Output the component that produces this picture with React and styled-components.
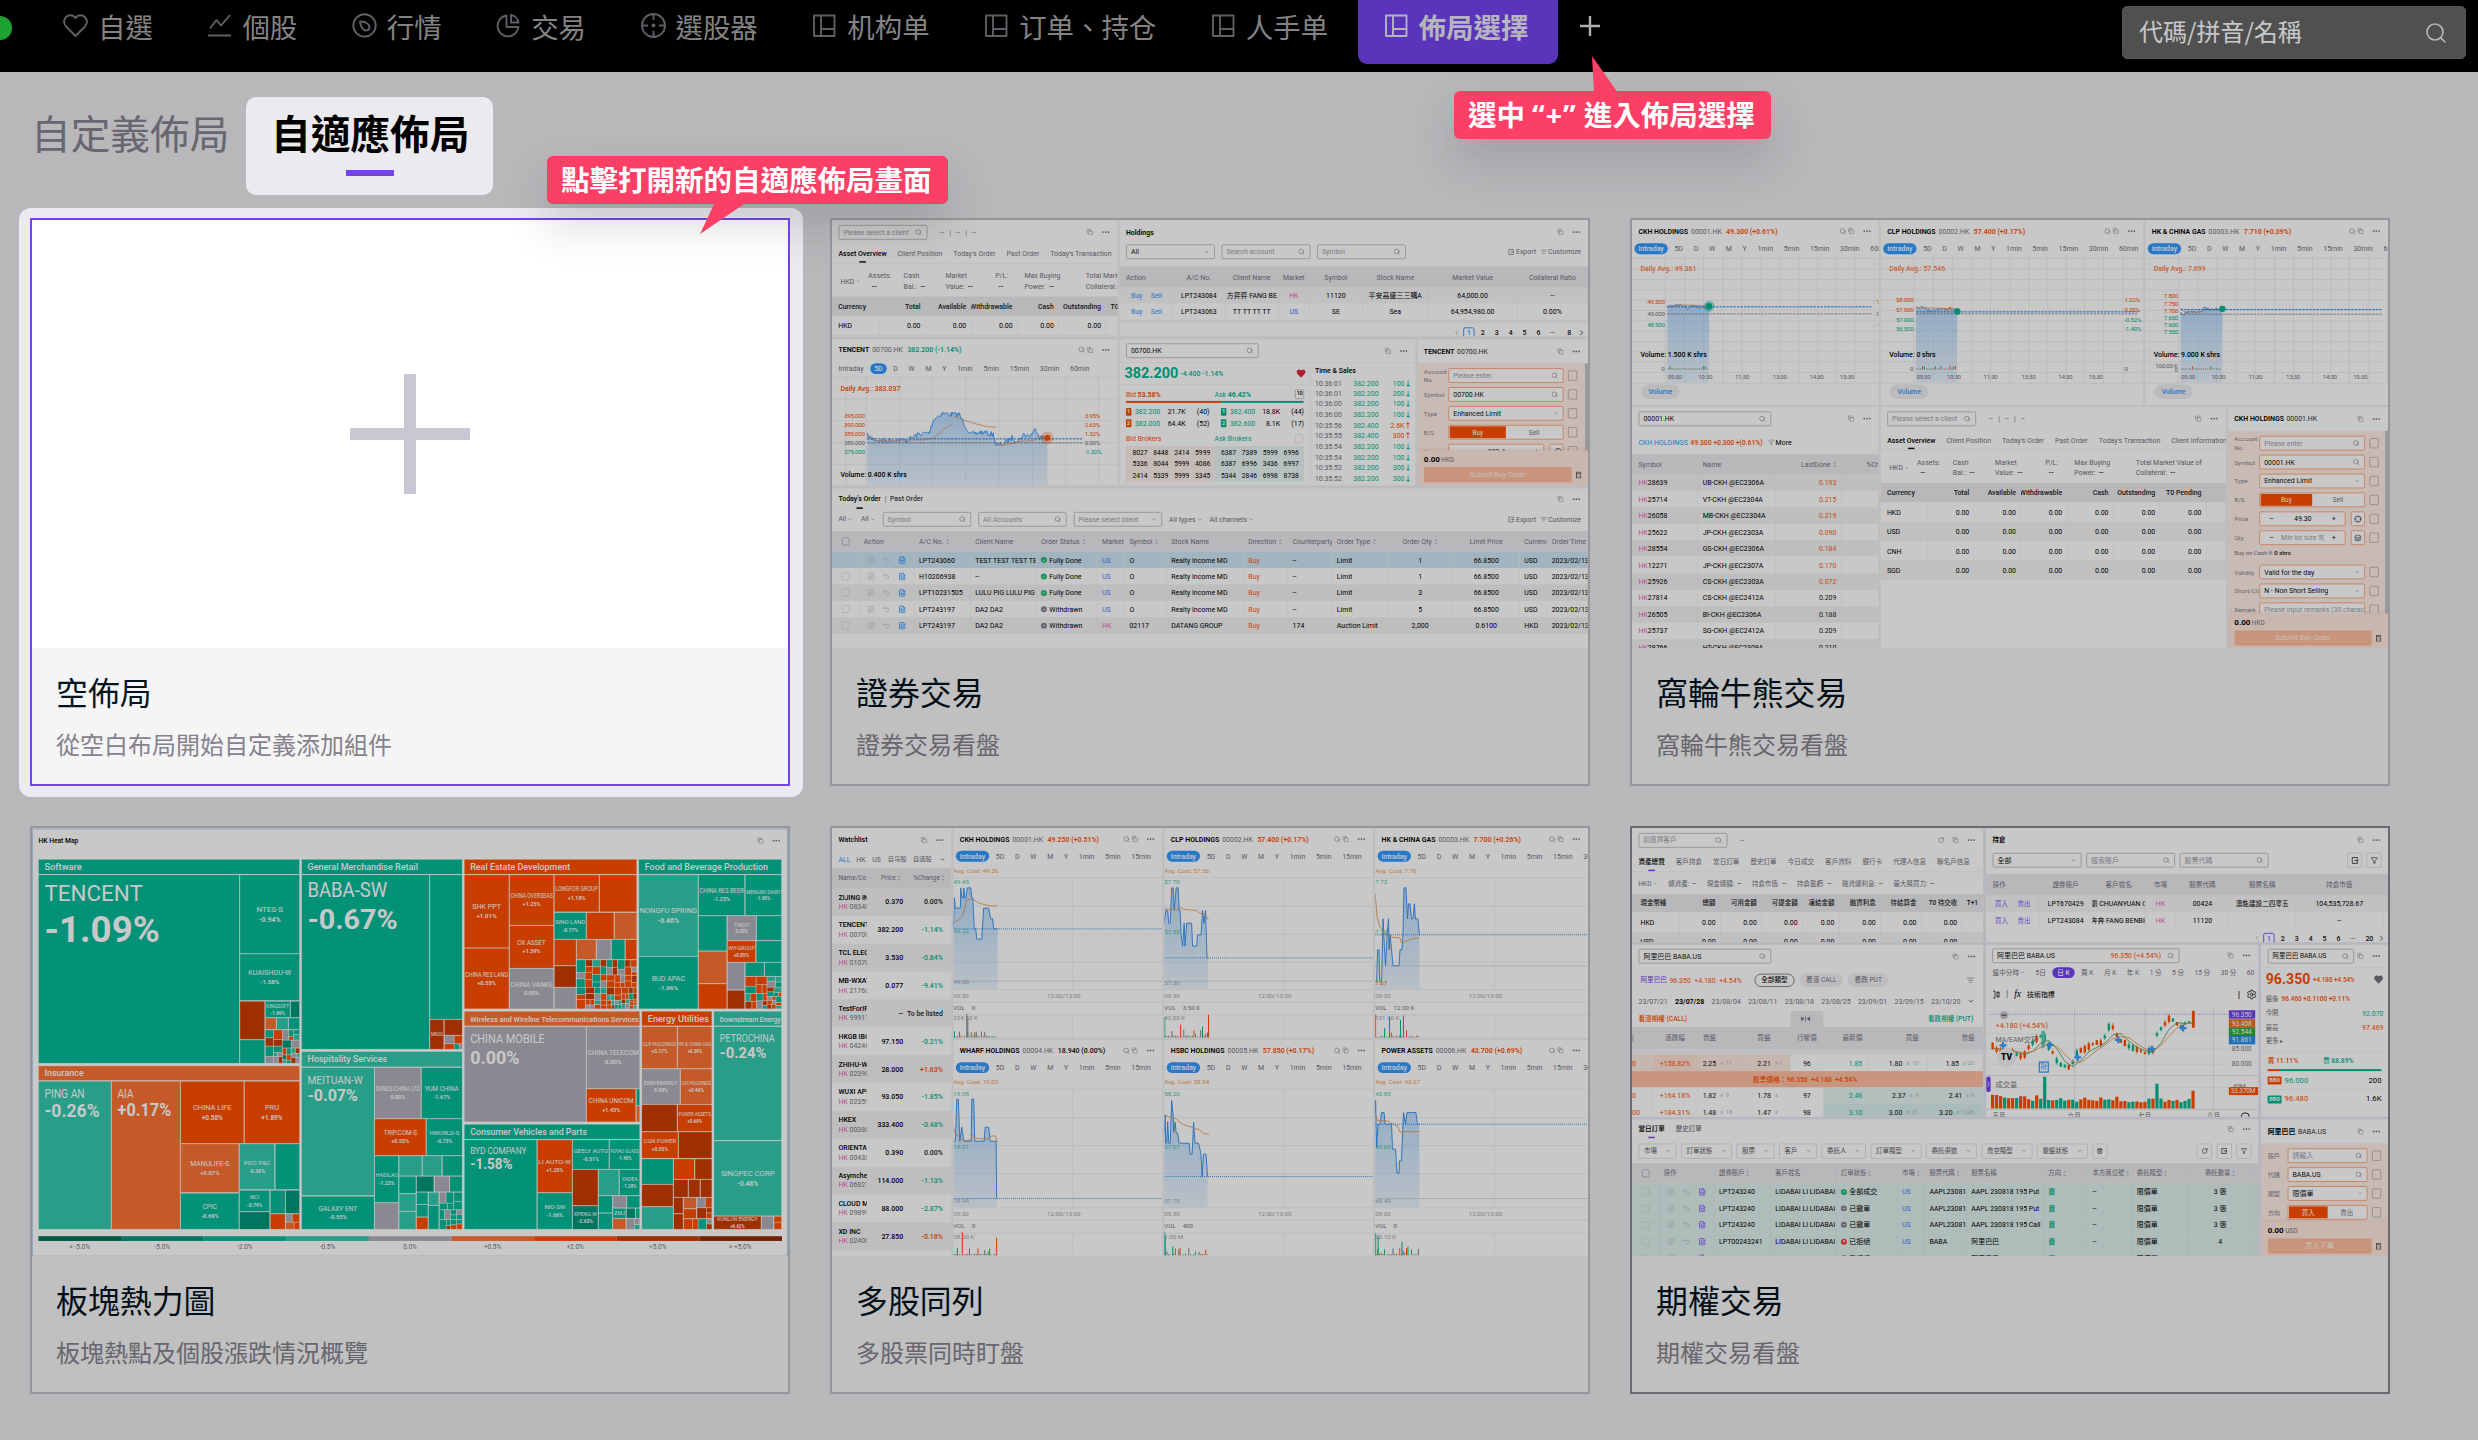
import React from 'react';
import styled, { createGlobalStyle } from 'styled-components';
import { Search, Copy, Ellipsis, ChevronDown, ChevronLeft, ChevronRight, SquarePen, Undo2, FileText, Filter, Crosshair, Layers, RotateCw, Trash2, ListFilter, Settings } from 'lucide-react';

const RED = '#ff4f00';
const GREEN = '#04b58f';
const BLUE = '#3399ff';
const PURPLE = '#7343ef';
const GRAY = '#74727d';
const LINE = '#ececf0';
const PINK = '#f45fc0';

const Global = createGlobalStyle`
  * { box-sizing: border-box; }
  body { margin: 0; background: #ebeaee; font-family: Roboto, "Noto Sans CJK TC", sans-serif; }
  svg { display: block; flex: none; }
`;

/* ---------- page shell ---------- */
const Page = styled.div`position: relative; width: 2478px; height: 1440px; overflow: hidden; background: #ebeaee;`;
const Dim = styled.div`position: absolute; inset: 0; background: rgba(0, 0, 0, 0.216); z-index: 2;`;
const Header = styled.header`
  height: 72px; background: #000; display: flex; justify-content: space-between; align-items: flex-start;
  font-family: "Noto Sans CJK TC", sans-serif; color: #a9a8a8;
`;
const Nav = styled.nav`display: flex; align-items: flex-start;`;
const Status = styled.i`width: 24px; height: 24px; border-radius: 50%; background: #26d03f; margin: 16px 51px 0 -12px;`;
const NavItem = styled.div`
  display: flex; align-items: center; gap: 10px; height: 51px; margin-right: 54.5px; white-space: nowrap; font-size: 27.45px;
  svg { color: #7b7983; }
`;
const ActiveNav = styled(NavItem)`
  width: 200px; height: 64px; padding: 0 0 13px 26px; margin: 0 22px 0 -25px; border-radius: 0 0 9px 9px;
  background: ${PURPLE}; color: #e9e6f0; font-weight: 700;
  svg { color: #e9e6f0; }
`;
const Plus = styled.span`display: flex; align-items: center; height: 51px; color: #e0e0e0;`;
const SearchField = styled.div`
  width: 344px; height: 53px; margin: 6px 12px 0 0; padding: 0 17px 4px 16px; border-radius: 5px; background: #666;
  border: 1px solid #6f7074; display: flex; align-items: center; justify-content: space-between; font-size: 24px; color: #fff;
  svg { color: #e8e8e8; margin-top: 4px; }
`;
const TabBar = styled.div`
  height: 146px; padding: 25px 0 0 31px; display: flex; gap: 18px; font: 39.7px/1 "Noto Sans CJK TC", sans-serif; color: #85838f;
`;
const PageTab = styled.div`height: 98px; padding-top: 15px; width: 197px; white-space: nowrap;`;
const SpotTab = styled(PageTab)`
  position: relative; z-index: 3; width: 247px; padding: 15px 0 0 25px; background: #ebeaee; border-radius: 10px; color: #000; font-weight: 700;
`;
const TabLine = styled.div`width: 48px; height: 6px; background: ${PURPLE}; margin: 18px 0 0 75px;`;
const CardGrid = styled.main`display: grid; grid-template-columns: repeat(3, 760px); grid-auto-rows: 568px; gap: 40px; padding-left: 30px;`;
const Card = styled.section`
  position: relative; height: 568px; border: 2px solid ${p => p.$border || '#c1c0c8'}; background: #f5f5f5; display: flex; flex-direction: column;
`;
const Spotlight = styled.div`
  position: relative; z-index: 3;
  &::before { content: ''; position: absolute; inset: -10px -13px -11px -11px; border-radius: 12px; background: #ebeaee; }
`;
const Preview = styled.div`width: 756px; height: 428px; overflow: hidden; background: #fff; display: flex; align-items: center; justify-content: center;`;
const Stage = styled.div`
  flex: none; width: 1520px; height: 861px; transform: scale(0.49737); background: ${p => p.$bg || '#f0f0f4'};
  display: grid; gap: ${p => p.$gap || '6px 4px'}; font-size: 14px; line-height: 1; color: #000; white-space: nowrap;
  grid-template-columns: ${p => p.$cols || '1520px'}; grid-template-rows: ${p => p.$rows || '861px'};
`;
const Caption = styled.div`padding: 25px 0 0 24px; font-family: "Noto Sans CJK TC", sans-serif;`;
const Title = styled.div`font-size: 31.9px; line-height: 36px; color: #04141f;`;
const Sub = styled.div`font-size: 24px; line-height: 28px; margin-top: 21px; color: #85828e;`;
const Callout = styled.div`
  position: absolute; z-index: 4; left: ${p => p.$x}px; top: ${p => p.$y}px; width: ${p => p.$w}px; height: 48px; border-radius: 6px; padding-left: 14px;
  background: #fc3f65; color: #fff; font: 700 28.5px/46px "Noto Sans CJK TC", sans-serif; white-space: nowrap;
  svg { position: absolute; left: ${p => p.$tx}px; top: ${p => p.$ty}px; }
  box-shadow: 0 22px 44px rgba(40, 44, 50, 0.17);
`;
const Quote = styled.span`font-family: "Open Sans", Roboto, sans-serif; font-size: 28.5px; letter-spacing: 1px; margin: 0 7px 0 7px;`;

/* ---------- preview building blocks ---------- */
const Panel = styled.div`
  background: ${p => p.$bg || '#fff'}; overflow: hidden; display: flex; flex-direction: column; min-width: 0; min-height: 0;
  grid-area: ${p => p.$area || 'auto'};
`;
const Row = styled.div`
  display: flex; flex: none; align-items: ${p => p.$ai || 'center'}; justify-content: ${p => p.$jc || 'flex-start'};
  height: ${p => (p.$h ? p.$h + 'px' : 'auto')}; gap: ${p => p.$g || 0}px; padding: ${p => p.$p || '0 14px 0 13px'};
  background: ${p => p.$bg || 'transparent'}; border-bottom: ${p => (p.$line ? '1.5px solid ' + LINE : '0')}; overflow: hidden;
`;
const Cols = styled.div`
  display: grid; flex: none; grid-template-columns: ${p => p.$c}; align-items: center; height: ${p => p.$h}px;
  padding: ${p => p.$p || '0 0 0 13px'}; background: ${p => p.$bg || 'transparent'}; overflow: hidden;
`;
const T = styled.span`
  color: ${p => p.$c || 'inherit'}; font-weight: ${p => p.$w || 400}; font-size: ${p => (p.$s ? p.$s + 'px' : 'inherit')};
  text-align: ${p => p.$a || 'left'}; flex: none; margin-left: ${p => p.$ml || 0}px; display: inline-flex; align-items: center; gap: 3px;
  justify-content: ${p => (p.$a === 'right' ? 'flex-end' : p.$a === 'center' ? 'center' : 'flex-start')};
`;
const Grow = styled.div`flex: 1;`;
const Field = styled.div`
  width: ${p => p.$w}px; height: 30px; flex: none; border: 2px solid ${p => p.$b || '#c4c2cc'}; border-radius: 3px; background: #fff;
  display: flex; align-items: center; justify-content: space-between; padding: 0 9px 0 8px; color: ${p => p.$c || '#a09ea9'}; overflow: hidden;
  svg { color: ${GRAY}; }
`;
const Tabs = styled.div`display: flex; gap: ${p => p.$g}px; height: ${p => p.$h}px; padding: ${p => p.$p || '0 0 0 13px'}; align-items: center; color: ${GRAY}; overflow: hidden; flex: none; border-bottom: 1.5px solid ${LINE};`;
const OnTab = styled.span`
  color: #000; font-weight: 500; height: 100%; display: flex; flex-direction: column; justify-content: center; align-items: center; position: relative; flex: none;
  &::after { content: ''; width: 13px; height: 3px; background: ${p => p.$c || '#111'}; position: absolute; bottom: 1px; }
`;
const Pill = styled.span`
  height: ${p => p.$h || 22}px; padding: 0 ${p => p.$px || 8}px; border-radius: 14px; background: ${p => p.$bg || '#3399ff'}; color: ${p => p.$c || '#fff'};
  font-weight: ${p => p.$w || 500}; display: inline-flex; align-items: center; flex: none; border: ${p => p.$bd || '0'};
`;
const Check = styled.i`width: ${p => p.$w || 15}px; height: ${p => p.$h || 15}px; border: 1.8px solid ${p => p.$c || '#85838e'}; border-radius: 2px; flex: none;`;
const Cell = styled.div`
  height: 100%; display: flex; align-items: center; overflow: hidden; padding: 0 ${p => (p.$a === 'c' ? 0 : 9)}px; gap: 5px; border-right: 1.2px solid ${p => p.$line || LINE};
  justify-content: ${p => ({ l: 'flex-start', c: 'center', r: 'flex-end' }[p.$a])}; color: ${p => p.$c || 'inherit'}; min-width: 0;
  font-weight: ${p => p.$w || 'inherit'};
`;
const TRow = styled.div`
  display: grid; flex: none; grid-template-columns: ${p => p.$cols}; height: ${p => p.$h}px; background: ${p => p.$bg};
  color: ${p => p.$c || '#000'}; font-weight: ${p => p.$w || 400};
`;
const Tick = styled.i`
  width: 12px; height: 12px; border-radius: 50%; background: ${p => p.$bg}; color: #fff; font: 700 9px/12px Roboto; text-align: center; flex: none;
`;
const Bar = styled.div`display: flex; flex: none; height: 4px; margin: ${p => p.$m}; i { background: ${RED}; width: ${p => p.$v}%; } i + i { background: ${GREEN}; flex: 1; }`;

const put = (c) => (c && typeof c === 'object' && !React.isValidElement(c) ? c : { t: c });
function Table({ cols, align, head, rows, hh, rh, bg, headBg = '#ebebef', headC = GRAY, headW = 400, line }) {
  const tpl = cols.map(w => w + 'px').join(' ');
  return (
    <>
      {head && <TRow $cols={tpl} $h={hh} $bg={headBg} $c={headC} $w={headW}>
        {head.map((c, i) => <Cell key={i} $a={align[i]} $line={line}>{c}</Cell>)}
      </TRow>}
      {rows.map((r, j) => (
        <TRow key={j} $cols={tpl} $h={rh} $bg={bg ? bg(j) : j % 2 ? '#f5f5f6' : '#fff'}>
          {r.map((c, i) => { const o = put(c); return <Cell key={i} $a={o.a || align[i]} $c={o.c} $w={o.w} $line={line}>{o.t}</Cell>; })}
        </TRow>
      ))}
    </>
  );
}

const Tools = ({ search, refresh }) => (
  <T $c={GRAY}>
    {search && <Search size={14} strokeWidth={1.8} />}
    {refresh && <><RotateCw size={13} strokeWidth={2} /><T $ml={10} /></>}
    <Copy size={13} strokeWidth={1.8} />
    <T $ml={10} />
    <Ellipsis size={19} strokeWidth={2.6} />
  </T>
);
const Sort = () => <svg width="7" height="14" viewBox="0 0 7 14"><path d="M3.5 1 6.5 5H.5ZM3.5 13 .5 9h6Z" fill="#b9b7c0" /></svg>;
const S = ({ children }) => <>{children}<Sort /></>;
const Down = ({ s = 11 }) => <ChevronDown size={s} strokeWidth={2.2} />;
const Mag = () => <Search size={14} strokeWidth={1.8} />;
const HeartFill = ({ c }) => <svg width="20" height="20" viewBox="0 0 24 24"><path fill={c} d="M12 22 3 12.5C-.5 8 2.500 2 7.500 2 10 2 12 4.500 12 4.500S14 2 16.500 2C21.500 2 24.500 8 21 12.500Z" /></svg>;
const OutBox = ({ s = 13 }) => <svg width={s} height={s} viewBox="0 0 14 14" fill="none" stroke="currentColor" strokeWidth="1.500"><path d="M12 4V1.500H2v11h10V10M6 7h7M10.500 4.500 13 7l-2.500 2.500" /></svg>;
const Export = () => <T $c={GRAY}><OutBox /> <span>Export</span><T $ml={3} /><ListFilter size={12} /><span>Customize</span></T>;

/* ---------- asset overview ---------- */
const Two = styled.div`line-height: 21px; color: ${GRAY}; display: flex; flex-direction: column; text-align: ${p => p.$a || 'left'}; b { color: #222; font-weight: 500; }`;
function AssetPanel({ wide, area }) {
  const cur = wide ? ['HKD', 'USD', 'CNH', 'SGD'] : ['HKD', ''];
  const cols = wide ? [95, 93, 94, 93, 93, 94, 93, 39] : [96, 92, 92, 93, 83, 95, 50];
  const al = ['l', 'r', 'r', 'r', 'r', 'r', wide ? 'r' : 'l', 'l'];
  const v = cur.map(c => (c ? [<span key="c">&nbsp;{c}</span>, '0.00', '0.00', '0.00', '0.00', '0.00', wide ? '0.00' : ''] : ['', '', '', '', '', '', '']));
  const head = [<span key="c">&nbsp;Currency</span>, 'Total', 'Available', <span key="w" style={{ margin: '0 0 0 -9px' }}>Withdrawable</span>, 'Cash', 'Outstanding', wide ? 'T0 Pending' : 'T0'];
  if (wide) { head.push(''); v.forEach(r => r.push('')); }
  return (
    <Panel $area={area}>
      <Row $h={47}><Field $w={179}>Please select a client <Mag /></Field><T $c={GRAY} $ml={26} $g={9}>--&nbsp;&nbsp; | &nbsp;&nbsp;--&nbsp;&nbsp; | &nbsp;&nbsp;--</T><Grow /><Tools /></Row>
      <Tabs $h={40} $g={22}><OnTab>Asset Overview</OnTab><T>Client Position</T><T>Today's Order</T><T>Past Order</T><T>Today's Transaction</T>{wide && <T>Client Information</T>}</Tabs>
      <Cols $h={66} $p="4px 0 0 17px" $c={wide ? '56px 72px 85px 101px 58px 124px auto' : '56px 71px 84px 100px 59px 123px auto'}>
        <T $c={GRAY}>HKD <Down s={9} /></T>
        <Two><span>Assets:</span><b>&nbsp;&nbsp;--</b></Two>
        <Two><span>Cash</span><span>Bal.: &nbsp;<b>--</b></span></Two>
        <Two><span>Market</span><span>Value: &nbsp;<b>--</b></span></Two>
        <Two><span>P/L:</span><b>&nbsp;&nbsp;--</b></Two>
        <Two><span>Max Buying</span><span>Power: &nbsp;<b>--</b></span></Two>
        <Two><span>Total Market Value of</span><span>Collateral: &nbsp;<b>--</b></span></Two>
      </Cols>
      <Table cols={cols} align={al} head={head} rows={v} hh={39} rh={39} headC="#222" headW={500} />
    </Panel>
  );
}

/* ---------- order ticket ---------- */
const Ticket = styled.div`flex: 1; min-height: 0; background: #ffede6; overflow: hidden; padding: 6px 0 0 13px; position: relative;`;
const TicketRow = styled.div`display: grid; grid-template-columns: ${p => p.$l}px ${p => p.$f}px 30px; height: 38px; align-items: center; color: #85838e; font-size: 12.5px; line-height: 17px;
  & > ${Check} { margin-left: 9px; }
  & > span { white-space: normal; overflow: hidden; max-height: 34px; }`;
const TF = styled(Field)`font-size: 14px; border-color: #ffab85; width: 100%;`;
const Side = styled.i`flex: 1; height: 24px; display: flex; align-items: center; justify-content: center; font-style: normal; font-size: 13px; background: ${p => (p.$on ? RED : '#fff')}; color: ${p => (p.$on ? '#fff' : '#777')};`;
const Pair = styled.div`display: grid; grid-template-columns: 1fr 29px; gap: 10px; svg { color: #222; } ${TF} { padding: 0 ${p => p.$px || 9}px; }`;
const TicketFoot = styled.div`height: 70px; flex: none; background: #ffe8df; padding: 9px 13px 0; box-shadow: 0 -3px 6px rgba(200, 90, 50, 0.12); display: flex; flex-direction: column; gap: 8px; position: relative;`;
const Submit = styled.div`height: 31px; flex: 1; background: #ffbd9e; color: #fff3ec; display: flex; align-items: center; justify-content: center; border-radius: 2px; font-size: 14.5px;`;
const Scroll = styled.i`position: absolute; right: 0; top: 0; width: 6px; height: 100%; background: #c3c2c8;`;

const Calc = () => <svg width="12" height="14" viewBox="0 0 12 14" fill="none" stroke="#333" strokeWidth="1.4"><rect x="1.500" y="1" width="9" height="12" /><path d="M3.500 4h5M4 7h1M7 7h1M4 10h1M7 10h1" /></svg>;
function Ticketing({ name, code, rows, l, f, unit = 'HKD', submit = 'Submit Buy Order', area, scroll }) {
  return (
    <Panel $area={area}>
      {name && <Row $h={48}><T $w={600}>{name}</T><T $c="#333" $ml={5}>{code}</T><Grow /><Tools /></Row>}
      <Ticket>
        {rows.map((r, i) => r.note
          ? <Row key={i} $h={31} $p="0 0 10px 0"><T $s={12} $c={GRAY}>Buy on Cash <Tick $bg="#b9b7c0" style={{ width: 8, height: 8 }} /> <T $c="#111" $w={500}>0 shrs</T></T></Row>
          : <TicketRow key={i} $l={l} $f={f}>
              <span>{r.l}</span>{r.f}<Check $w={18} $h={20} />
            </TicketRow>)}
        {scroll && <Scroll />}
      </Ticket>
      <TicketFoot>
        <T $w={700} $s={16}>0.00 <T $c={GRAY} $s={13}>{unit}</T></T>
        <Row $g={8} $p="0"><Submit>{submit}</Submit><Calc /></Row>
      </TicketFoot>
    </Panel>
  );
}
const Side2 = ({ a = 'Buy', b = 'Sell' }) => <TF style={{ padding: 1 }}><Side $on>{a}</Side><Side>{b}</Side></TF>;
const ask = (t, hint) => <TF $c={hint ? '#a09ea9' : '#111'}>{t}<Mag /></TF>;
const pick = t => <TF $c="#111">{t}<Down s={10} /></TF>;

/* ---------- charts ---------- */
const K = 0.6702;
const IntervalTabs = ({ on = 'Intraday', all = ['Intraday', '5D', 'D', 'W', 'M', 'Y', '1min', '5min', '15min', '30min', '60min'], h = 27 }) => (
  <Row $h={h} $g={21.5} $p={on === 'Intraday' ? '0 0 0 5px' : '0 0 0 13px'}>
    {all.map((t, i) => t === on
      ? <Pill key={t} style={{ marginRight: -8, marginLeft: i ? -8 : 0 }}>{t}</Pill>
      : <T key={t} $c={GRAY}>{t}</T>)}
  </Row>
);
const QuoteHead = ({ n, c, p, color = RED, h = 43 }) => (
  <Row $h={h}><T $w={600}>{n}</T><T $c={GRAY} $ml={6}>{c}</T><T $c={color} $w={600} $ml={9}>{p}</T><Grow /><Tools search /></Row>
);
const line = (pts, y) => pts.map((p, i) => (i ? 'L' : 'M') + p[0] + ' ' + y(p[1]).toFixed(1)).join('');
function rng(seed) { let s = seed; return () => { s = (s * 16807) % 2147483647; return s / 2147483647; }; }
function jag(keys, step, amp, seed) {
  const r = rng(seed); const out = [];
  for (let k = 0; k < keys.length - 1; k++) {
    const [x0, y0] = keys[k], [x1, y1] = keys[k + 1];
    for (let x = x0; x < x1; x += step) out.push([x, y0 + (y1 - y0) * (x - x0) / (x1 - x0) + (r() - 0.5) * amp]);
  }
  out.push(keys[keys.length - 1]);
  return out;
}
const Fill = ({ id }) => <defs><linearGradient id={id} x1="0" y1="0" x2="0" y2="1"><stop offset="0" stopColor="#5aa8f5" stopOpacity=".42" /><stop offset="1" stopColor="#5aa8f5" stopOpacity=".12" /></linearGradient></defs>;

function TencentChart() {
  const y = v => (v - 498) * K;
  const pts = jag([[71, 675], [80, 685], [100, 692], [120, 688], [150, 690], [175, 670], [195, 668], [205, 625], [222, 608], [240, 612], [256, 612], [266, 640], [278, 672], [300, 665], [325, 672], [330, 705], [345, 700], [362, 682], [375, 690], [385, 672], [398, 676], [410, 655], [418, 680], [433, 682]], 2.2, 16, 7);
  return (
    <svg width="574" height="219" fontSize="13" fontFamily="Roboto">
      <Fill id="tc" />
      {[0, 1, 2, 3, 4, 5].map(i => <path key={i} d={`M0 ${i * 44 + 1}H574`} stroke={LINE} strokeWidth="1.5" />)}
      {[28, 69, 136, 202, 269, 336, 403, 470, 536].map(x => <path key={x} d={`M${x} 0V219`} stroke={LINE} strokeWidth="1.5" />)}
      <path d={line(pts, y) + 'V219H71Z'} fill="url(#tc)" /><path d={line(pts, y)} fill="none" stroke={BLUE} strokeWidth="1.8" />
      <path d={line([[71, 672], [90, 690], [185, 688], [205, 682], [225, 655], [243, 640]], y) + line([[245, 616], [262, 628], [290, 640], [310, 648], [330, 650]], y) + line([[330, 705], [360, 700], [380, 692], [405, 690], [415, 680], [430, 684]], y)} fill="none" stroke="#e8946b" strokeWidth="1.6" />
      <path d={`M71 ${y(685)}H504`} stroke="#1f7ee6" strokeWidth="2" strokeDasharray="5 2" /><path d={`M71 ${y(697)}H504`} stroke="#666" strokeWidth="1.5" strokeDasharray="5 2" />
      <circle cx="433" cy={y(682)} r="13" fill="#ff4f0044" /><circle cx="433" cy={y(682)} r="6" fill={RED} />
      <text x="17" y={y(542)} fill={RED} fontWeight="500" fontSize="14">Daily Avg.: 383.037</text>
      {[['395.000', RED, 614, '3.95%'], ['390.000', RED, 642, '2.63%'], ['385.000', RED, 669, '1.32%'], ['380.000', GRAY, 697, '0.00%'], ['375.000', GREEN, 723, '-1.32%']].map(a => <g key={a[0]} fill={a[1]} letterSpacing="-.5" fontSize="12.5"><text x="66" y={y(a[2]) + 5} textAnchor="end">{a[0]}</text><text x="508" y={y(a[2]) + 5}>{a[3]}</text></g>)}
      <text x="17" y={y(799)} fontWeight="500" fontSize="14">Volume: 0.400 K shrs</text>
    </svg>
  );
}

function DayChart({ w, avg, vol, labels, rights, keys, av, blue, base, halo, seed, note }) {
  const y = v => (v - 140) * K;
  const pts = jag(keys, 2.2, 9, seed); const end = keys[keys.length - 1];
  const r = rng(seed + 3);
  return (
    <svg width={w} height="259" fontSize="12.5" fontFamily="Roboto">
      <Fill id={'dc' + seed} />
      {[150, 182, 213, 244, 275, 306, 337, 368, 400, 430, 460, 492, 524].map(v => <path key={v} d={`M0 ${y(v)}H${w}`} stroke={LINE} strokeWidth="1.5" />)}
      {[67, 106, 144, 183, 221, 260, 298, 336, 373, 410, 448, 487].map(x => <path key={x} d={`M${x} 0V${y(524)}`} stroke={LINE} strokeWidth="1.5" />)}
      <path d={line(pts, y) + `V${y(522)}H71Z`} fill={`url(#dc${seed})`} /><path d={line(pts, y)} fill="none" stroke={BLUE} strokeWidth="1.7" /><path d={line(av, y)} fill="none" stroke="#e8946b" strokeWidth="1.7" />
      <path d={`M71 ${y(blue)}H${w - 12}`} stroke="#1f7ee6" strokeWidth="1.9" strokeDasharray="5 2" /><path d={`M71 ${y(base)}H${w - 12}`} stroke="#777" strokeWidth="1.5" strokeDasharray="5 2" />
      {halo && <circle cx={end[0]} cy={y(end[1])} r="11" fill="#04b58f66" />}<circle cx={end[0]} cy={y(end[1])} r="6.500" fill={GREEN} />
      <text x="17" y={y(187)} fill="#ff7a3d" fontWeight="500" fontSize="14">Daily Avg.: {avg}</text>
      {labels.map(l => <text key={l[0]} x="66" y={y(l[1]) + 4} textAnchor="end" fill={l[2]} letterSpacing="-.5">{l[0]}</text>)}
      {rights.map(l => <text key={l[0]} x={l[3]} y={y(l[1]) + 4} fill={l[2]} letterSpacing="-.5">{l[0]}</text>)}
      <text x="17" y={y(445)} fontWeight="500" fontSize="14">Volume: {vol}</text>
      <text x="66" y={y(486) + (note ? 3 : 0)} textAnchor="end" fill={GRAY}>0</text>{note && <text x="20" y={y(478)} fill={GRAY} letterSpacing="-.5">{note}</text>}
      {Array.from({ length: 22 }, (_, i) => { const h = r() > 0.8 ? 7 : 2; return <rect key={i} x={72 + i * 3.7} y={y(483) - h} width="1.800" height={h} fill={[RED, GREEN, '#777'][i % 3]} />; })}
      {['09:30', '10:30', '11:30', '13:30', '14:30', '15:30'].map((t, i) => <text key={t} x={[86, 147, 221, 297, 371, 432][i]} y={y(512)} textAnchor="middle" fill={GRAY} letterSpacing="-.6">{t}</text>)}
    </svg>
  );
}
const VolumeChip = styled.div`margin: 1px 0 0 18px; width: 78px; height: 29px; border-radius: 15px; background: #efeff2; color: ${BLUE}; font-weight: 500; display: flex; align-items: center; justify-content: center; flex: none;`;

/* ---------- preview: securities trading ---------- */
const LocalGrid = styled.div`display: grid; grid-template-columns: ${p => p.$c}; flex: 1; min-height: 0;`;
const Col = styled.div`display: flex; flex-direction: column; min-width: 0; border-right: ${p => (p.$line ? '1.5px solid ' + LINE : 0)};`;
const Badge = styled.i`font: 700 11px/16px Roboto; width: ${p => p.$w || 11}px; height: 16px; text-align: center; color: #fff; background: ${p => p.$bg}; border-radius: 2px;`;
const Depth = styled.i`width: 18px; height: 19px; border: 1.800px solid #85838e; border-radius: 3px; font: 500 11px/15px Roboto; text-align: center; letter-spacing: -0.5px;`;
const Brokers = styled.div`display: grid; grid-template-columns: 178px 180px; margin: 1px 0 0 13px; height: 72px;`;
const BrokerSide = styled.div`background: ${p => p.$bg}; display: grid; grid-template-columns: repeat(4, 42px); align-content: space-evenly; padding-left: 13px; font-weight: 500; font-size: 13.5px;`;
const PageBtn = styled.span`width: 23px; height: 23px; display: inline-flex; align-items: center; justify-content: center; border-radius: 4px; border: ${p => (p.$c ? '2px solid ' + p.$c : 0)}; color: ${p => p.$c || '#111'}; font-weight: 500; flex: none;`;
const Pager = ({ color, last, bg }) => (
  <Row $h={38} $jc="flex-end" $g={5} $p="0 5px 0 0" $bg={bg}>
    <ChevronLeft size={16} color="#999" /><PageBtn $c={color}>1</PageBtn>
    {['2', '3', '4', '5', '6', '···', last].map(t => <PageBtn key={t} style={t === last ? { marginLeft: 6 } : undefined}>{t}</PageBtn>)}<ChevronRight size={16} />
  </Row>
);
const Pad = styled.span`margin-left: ${p => p.$x}px; margin-right: ${p => p.$r || 0}px; display: inline-flex; gap: ${p => p.$g || 4}px;`;
const actions = (c) => <Pad $x={7} $g={16}><SquarePen size={15} color="#c0bec8" /><Undo2 size={15} color="#c0bec8" /><FileText size={16} color={c} strokeWidth={2.4} /></Pad>;
const Status3 = ({ k, t }) => <><Tick $bg={k === 'ok' ? '#1eb774' : k === 'x' ? '#f03b3b' : '#85838e'}>{k === 'ok' ? '✓' : k === 'x' ? '×' : '–'}</Tick>{t}</>;
const orderCols = [55, 111, 113, 132, 123, 55, 84, 155, 89, 89, 111, 132, 134, 55, 82];
const orderAlign = ['c', 'l', 'l', 'l', 'l', 'l', 'l', 'l', 'l', 'l', 'l', 'c', 'c', 'l', 'l'];

function Securities() {
  const ord = (ac, nm, k, st, mk, sy, sn, cp, ty, q, pr, cu) => [<Check key="c" $c="#cfcdd6" />, { t: actions(BLUE) }, ac, nm, { t: <Status3 k={k} t={st} /> }, { t: mk, c: mk === 'HK' ? PINK : '#4a7dff' }, sy, sn, { t: 'Buy', c: '#ff5a1f' }, cp, ty, q, pr, cu, '2023/02/13'];
  return (
    <Stage $cols="574px 595px 343px" $rows="233px 294px 322px">
      <AssetPanel />
      <Panel $area="1 / 2 / 2 / 4">
        <Row $h={47}><T $w={600}>Holdings</T><Grow /><Tools /></Row>
        <Row $h={46} $g={13} $p="0 14px 14px 13px"><Field $w={179} $c="#111">All <Down /></Field><Field $w={179}>Search account <Mag /></Field><Field $w={179}>Symbol <Mag /></Field><Grow /><Export /></Row>
        <Table cols={[107, 106, 107, 62, 107, 132, 179, 142]} align={['l', 'c', 'c', 'c', 'c', 'c', 'c', 'c']} hh={41} rh={33}
          head={[<Pad key="a" $x={4}>Action</Pad>, 'A/C No.', 'Client Name', 'Market', 'Symbol', 'Stock Name', 'Market Value', 'Collateral Ratio']}
          bg={j => ['#f6f6f8', '#fff'][j]}
          rows={[[{ t: <Pad $x={14} $g={17}><span>Buy</span><span>Sell</span></Pad>, c: BLUE }, 'LPT243084', '方弈弈 FANG BE', { t: 'HK', c: PINK }, '11120', '平安高盛三三購A', '64,000.00', '--'],
            [{ t: <Pad $x={14} $g={17}><span>Buy</span><span>Sell</span></Pad>, c: BLUE }, 'LPT243063', 'TT TT TT TT', { t: 'US', c: '#3f6cff' }, 'SE', 'Sea', '64,954,980.00', '0.00%']]} />
        <Row $h={7} $bg="#f2f2f4" />
        <Pager color={BLUE} last="8" />
      </Panel>
      <Panel>
        <Row $h={42}><T $w={600}>TENCENT</T><T $c={GRAY} $ml={6}>00700.HK</T><T $c={GREEN} $w={600} $ml={9}>382.200 (-1.14%)</T><Grow /><Tools search /></Row>
        <IntervalTabs on="5D" h={33} />
        <TencentChart />
      </Panel>
      <Panel>
        <Row $h={47} $line><Field $w={267} $c="#111">00700.HK <Mag /></Field><Grow /><Tools /></Row>
        <LocalGrid $c="384px 211px">
          <Col $line>
            <Row $h={44} $line $p="0 8px 0 10px"><T $c={GREEN} $w={700} $s={29}>382.200</T><T $c={GREEN} $w={500} $ml={4}>-4.400 -1.14%</T><Grow /><HeartFill c="#e22438" /></Row>
            <Cols $h={33} $c="178px 162px auto" $p="6px 0 0 13px"><T $c={RED}>Bid <b>53.58%</b></T><T $c={GREEN}>Ask <b>46.42%</b></T><Depth>10</Depth></Cols>
            <Bar $v={53.6} $m="0 13px 6px 13px"><i /><i /></Bar>
            {[['1', '382.200', '21.7K', '(40)', '382.400', '18.8K', '(44)'], ['2', '382.000', '64.4K', '(52)', '382.600', '8.1K', '(17)']].map(r => (
              <Cols key={r[0]} $h={23} $c="18px 58px 44px 48px 23px 18px 58px 43px 48px"><Badge $bg={RED}>{r[0]}</Badge><T $c={GREEN}>{r[1]}</T><T $a="right">{r[2]}</T><T $a="right">{r[3]}</T><i /><Badge $bg={GREEN}>{r[0]}</Badge><T $c={GREEN}>{r[4]}</T><T $a="right">{r[5]}</T><T $a="right">{r[6]}</T></Cols>
            ))}
            <Cols $h={34} $c="178px 162px auto" $p="6px 0 0 13px"><T $c={RED}>Bid Brokers</T><T $c={GREEN}>Ask Brokers</T><Check $w={16} $h={18} $c="#cfcdd6" /></Cols>
            <Brokers>
              <BrokerSide $bg="#fdf0ea">{'8027 8448 2414 5999 5336 8044 5999 4086 2414 5339 5999 3345'.split(' ').map((t, i) => <T key={i} style={{ height: 22 }}>{t}</T>)}</BrokerSide>
              <BrokerSide $bg="#e9f6f4">{'6387 7389 5999 6996 6387 6996 3436 6997 5344 2846 6998 8738'.split(' ').map((t, i) => <T key={i} style={{ height: 22 }}>{t}</T>)}</BrokerSide>
            </Brokers>
          </Col>
          <Col>
            <Row $h={30} $p="2px 0 0 9px"><T $w={500}>Time &amp; Sales</T></Row>
            {[['10:36:01', '382.200', '100'], ['10:36:01', '382.200', '200'], ['10:36:00', '382.200', '100'], ['10:36:00', '382.200', '100'], ['10:35:56', '382.400', '2.6K', 1], ['10:35:55', '382.400', '300', 1], ['10:35:54', '382.200', '100'], ['10:35:54', '382.200', '100'], ['10:35:52', '382.200', '300'], ['10:35:52', '382.200', '300']].map((r, i) => (
              <Cols key={i} $h={21.3} $p="0 0 0 9px" $c="77px 59px 44px 14px"><T $c={GRAY}>{r[0]}</T><T $c={GREEN}>{r[1]}</T><T $a="right" $c={r[3] ? RED : GREEN}>{r[2]}</T><T $a="right" $w={700} $c={r[3] ? RED : GREEN}>{r[3] ? '↑' : '↓'}</T></Cols>
            ))}
          </Col>
        </LocalGrid>
      </Panel>
      <Ticketing name="TENCENT" code="00700.HK" l={49} f={232} scroll rows={[
        { l: 'Account No.', f: ask('Please enter', 1) }, { l: 'Symbol', f: ask('00700.HK') }, { l: 'Type', f: pick('Enhanced Limit') },
        { l: 'B/S', f: <Side2 /> }, { l: 'Price', f: <Pair><TF $c="#111">–<span>382.4</span>+</TF><TF><Crosshair size={14} /></TF></Pair> }]} />
      <Panel $area="3 / 1 / 4 / 4">
        <Row $h={42}><OnTab>Today's Order</OnTab><T $c={GRAY} $ml={8}>|</T><T $w={500} $c="#444" $ml={7}>Past Order</T><Grow /><Tools /></Row>
        <Row $h={44} $p="0 14px 4px 13px" $g={14}><T $c={GRAY} $s={13.5}>All <Down /></T><T $ml={-6} /><T $c={GRAY} $s={13.5} $ml={-6}>All <Down /></T><Field $w={178}>Symbol <Mag /></Field><Field $w={178}>All Accounts <Mag /></Field><Field $w={178}>Please select client <Down /></Field><T $c={GRAY}>All types <Down /></T><T $c={GRAY}>All channels <Down /></T><Grow /><Export /></Row>
        <Table cols={orderCols} align={orderAlign} hh={41} rh={33.1}
          bg={j => ['#cfe6f5', '#fff', '#f2f2f3', '#fff', '#f2f2f3'][j]}
          head={[<Check key="c" />, 'Action', <S key="a">A/C No.</S>, 'Client Name', <S key="o">Order Status</S>, 'Market', <S key="s">Symbol</S>, 'Stock Name', <S key="d">Direction</S>, 'Counterparty', <S key="t">Order Type</S>, <S key="q">Order Qty</S>, 'Limit Price', 'Currency', 'Order Time']}
          rows={[ord('LPT243060', 'TEST TEST TEST TEST', 'ok', 'Fully Done', 'US', 'O', 'Realty Income MD', '--', 'Limit', '1', '66.8500', 'USD'),
            ord('H10206938', '--', 'ok', 'Fully Done', 'US', 'O', 'Realty Income MD', '--', 'Limit', '1', '66.8500', 'USD'),
            ord('LPT10231505', 'LULU PIG LULU PIG', 'ok', 'Fully Done', 'US', 'O', 'Realty Income MD', '--', 'Limit', '3', '66.8500', 'USD'),
            ord('LPT243197', 'DA2 DA2', 'w', 'Withdrawn', 'US', 'O', 'Realty Income MD', '--', 'Limit', '5', '66.8500', 'USD'),
            ord('LPT243197', 'DA2 DA2', 'w', 'Withdrawn', 'HK', '02117', 'DATANG GROUP', '174', 'Auction Limit', '2,000', '0.6100', 'HKD')]} />
      </Panel>
    </Stage>
  );
}

/* ---------- preview: warrants ---------- */
function Warrants() {
  const w = [['28639', 'UB-CKH @EC2306A', '0.193'], ['25714', 'VT-CKH @EC2304A', '0.215'], ['26058', 'MB-CKH @EC2304A', '0.219'], ['25622', 'JP-CKH @EC2303A', '0.090'], ['28554', 'GS-CKH @EC2306A', '0.184'], ['12271', 'JP-CKH @EC2307A', '0.170'], ['25926', 'CS-CKH @EC2303A', '0.072'], ['27814', 'CS-CKH @EC2412A', '0.209', 1], ['26505', 'BI-CKH @EC2306A', '0.188', 1], ['25737', 'SG-CKH @EC2412A', '0.209', 1], ['28766', 'HT-CKH @EC2309A', '0.210', 1]];
  return (
    <Stage $cols="496px 528px 162px 322px" $rows="371px 486px" $gap="4px 4px">
      <Panel $area="1 / 1"><QuoteHead n="CKH HOLDINGS" c="00001.HK" p="49.300 (+0.61%)" /><IntervalTabs />
        <DayChart w={496} seed={11} avg="49.361" vol="1.500 K shrs" halo blue={295} base={316} labels={[['49.500', 281, RED], ['49.000', 315, GRAY], ['48.500', 350, GREEN]]} rights={[['1.02%', 281, RED, 491], ['0.00%', 315, GRAY, 491], ['-1.02%', 350, GREEN, 491]]}
          keys={[[71, 295], [90, 289], [105, 292], [112, 301], [120, 292], [135, 298], [155, 293]]} av={[[71, 295], [100, 289], [155, 292]]} />
        <VolumeChip>Volume</VolumeChip></Panel>
      <Panel $area="1 / 2"><QuoteHead n="CLP HOLDINGS" c="00002.HK" p="57.400 (+0.17%)" /><IntervalTabs />
        <DayChart w={528} seed={23} avg="57.546" vol="0 shrs" blue={310} base={316} labels={[['58.000', 275, RED], ['57.500', 304, RED], ['57.000', 333, GREEN], ['56.500', 362, GREEN]]} rights={[['1.22%', 275, RED, 490], ['0.35%', 304, RED, 490], ['-0.52%', 333, GREEN, 490], ['-1.40%', 362, GREEN, 490], ['0', 482, GRAY, 490]]}
          keys={[[71, 300], [90, 297], [100, 309], [115, 300], [130, 305], [140, 299], [154, 309]]} av={[[71, 297], [154, 301]]} />
        <VolumeChip>Volume</VolumeChip></Panel>
      <Panel $area="1 / 3 / 2 / 5"><QuoteHead n="HK & CHINA GAS" c="00003.HK" p="7.710 (+0.39%)" /><IntervalTabs />
        <DayChart w={488} seed={37} avg="7.699" vol="9.000 K shrs" note="100.00 K" blue={303} base={317} labels={[['7.800', 263, RED], ['7.750', 285, RED], ['7.700', 306, RED], ['7.650', 328, GREEN], ['7.600', 350, GREEN], ['7.550', 371, GREEN]]} rights={[]}
          keys={[[71, 315], [85, 312], [100, 308], [112, 310], [118, 297], [130, 303], [155, 301]]} av={[[71, 298], [78, 310], [110, 311], [125, 303], [150, 305]]} />
        <VolumeChip>Volume</VolumeChip></Panel>
      <Panel $area="2 / 1">
        <Row $h={47}><Field $w={267} $c="#111">00001.HK <Mag /></Field><Grow /><Tools /></Row>
        <Row $h={48} $g={5}><T $c={BLUE}>CKH HOLDINGS</T><T $c={RED} $w={500} style={{ letterSpacing: -0.2 }}>49.300 +0.300 +(0.61%)</T><T $ml={6}><Filter size={12} color={GRAY} />More</T></Row>
        <Table cols={[133, 156, 132, 75]} align={['l', 'l', 'r', 'r']} hh={41} rh={33.1} headBg="#ebebef" bg={j => (j % 2 ? '#fff' : '#f2f2f3')}
          head={[<Pad key="s" $x={4}>Symbol</Pad>, 'Name', <S key="l">LastDone</S>, <Pad key="p" $x={0} $r={-12}>%Ch</Pad>]}
          rows={w.map(r => [{ t: <Pad $x={4} $g={0.1}><T $c={PINK}>HK</T>{r[0]}</Pad> }, r[1], { t: r[2], c: r[3] ? '#222' : '#ff5a1f' }, ''])} />
      </Panel>
      <AssetPanel wide area="2 / 2 / 3 / 4" />
      <Ticketing area="2 / 4" name="CKH HOLDINGS" code="00001.HK" l={50} f={213} scroll rows={[
        { l: 'Account No.', f: ask('Please enter', 1) }, { l: 'Symbol', f: ask('00001.HK') }, { l: 'Type', f: pick('Enhanced Limit') }, { l: 'B/S', f: <Side2 /> },
        { l: 'Price', f: <Pair $px={18}><TF $c="#111">–<span>49.30</span>+</TF><TF style={{ padding: 5 }}><Crosshair size={15} /></TF></Pair> },
        { l: 'Qty', f: <Pair $px={18}><TF $c="#111">–<T $c="#a09ea9">Min lot size 5(</T>+</TF><TF style={{ padding: 5 }}><Layers size={15} /></TF></Pair> },
        { note: 1 }, { l: 'Validity', f: pick('Valid for the day') }, { l: 'Short/Clo', f: pick('N - Non Short Selling') }, { l: 'Remark', f: <TF>Please input remarks (30 charac</TF> }]} />
    </Stage>
  );
}

/* ---------- preview: heat map ---------- */
const HC = { a: '#006d58', b: '#00967b', c: '#04ba99', d: '#33c9ae', n: '#b1aeb8', e: '#fb7333', f: '#ff4f00', g: '#cc3d00', h: '#902c00' };
const sectors = [[37, 117, 562, 162, 'c', 'Software', 18], [566, 117, 889, 162, 'c', 'General Merchandise Retail', 18.5], [893, 117, 1240, 162, 'f', 'Real Estate Development', 18.5], [1244, 117, 1531, 162, 'c', 'Food and Beverage Production', 18.5], [37, 737, 562, 781, 'e', 'Insurance', 18.5], [566, 694, 889, 740, 'd', 'Hospitality Services', 18.2], [893, 573, 1246, 617, 'e', 'Wireless and Wireline Telecommunications Services', 15.5], [1250, 573, 1391, 617, 'f', 'Energy Utilities', 18.5], [1395, 573, 1531, 617, 'd', 'Downstream Energy', 15.5], [893, 912, 1246, 957, 'c', 'Consumer Vehicles and Parts', 18.5]];
const headLen = { Software: 75, Insurance: 79, 'Hospitality Services': 160, 'Consumer Vehicles and Parts': 235, 'Downstream Energy': 122, 'Wireless and Wireline Telecommunications Services': 339, 'Energy Utilities': 123, 'Real Estate Development': 201, 'Food and Beverage Production': 248, 'General Merchandise Retail': 222 };
const big = [[37, 164, 441, 729, 'c', 'TENCENT', '-1.09%', 46, 76, 242, 366, 198, 232], [566, 164, 823, 687, 'c', 'BABA-SW', '-0.67%', 40, 57, 231, 326, 160, 181], [37, 783, 183, 1227, 'd', 'PING AN', '-0.26%', 24, 37, 833, 890, 81, 111], [184, 783, 322, 1227, 'e', 'AIA', '+0.17%', 24, 36, 833, 887, 32, 108], [566, 742, 712, 1126, 'd', 'MEITUAN-W', '-0.07%', 23, 34, 790, 842, 111, 101], [893, 619, 1138, 905, 'n', 'CHINA MOBILE', '0.00%', 25, 38, 669, 731, 150, 99], [1395, 619, 1531, 960, 'd', 'PETROCHINA', '-0.24%', 22, 31, 665, 712, 110, 94], [893, 959, 1039, 1227, 'c', 'BYD COMPANY', '-1.58%', 20, 29, 1002, 1045, 113, 85]];
const tiles = [[442, 164, 562, 400, 'c', 'NTES-S', '-0.94%', 14], [442, 401, 562, 541, 'c', 'KUAISHOU-W', '-1.58%', 12.5], [442, 543, 492, 658, 'g'], [493, 543, 543, 592, 'c', 'KINGSOFT', '-1.99%', 9.5], [544, 543, 562, 592, 'b'], [442, 659, 492, 729, 'c'], [493, 593, 515, 628, 'e'], [516, 593, 539, 628, 'd'], [540, 593, 562, 628, 'c'],
  [824, 164, 889, 597, 'c'], [824, 598, 852, 687, 'g', 'MNSO', '', 9.5], [853, 598, 889, 645, 'g'],
  [566, 1128, 712, 1227, 'c', 'GALAXY ENT', '-0.55%', 11.5], [713, 742, 806, 895, 'n', 'SANDS CHINA LTD', '0.00%', 11], [807, 742, 889, 895, 'c', 'YUM CHINA', '-1.67%', 11], [713, 896, 816, 1006, 'f', 'TRIP.COM-S', '+0.53%', 11], [817, 896, 889, 1006, 'c', 'HWORLD-S', '-0.73%', 10.5], [713, 1007, 761, 1147, 'c', 'HAIDILAO', '-1.23%', 10.5], [713, 1148, 761, 1227, 'n'], [762, 1007, 808, 1067, 'd'], [809, 1007, 848, 1067, 'd'], [849, 1007, 889, 1067, 'c'], [762, 1068, 796, 1120, 'c'], [797, 1068, 832, 1115, 'b'], [833, 1068, 863, 1115, 'n'], [864, 1068, 889, 1115, 'c'], [762, 1121, 796, 1173, 'd'], [762, 1174, 796, 1227, 'd'], [797, 1116, 820, 1152, 'c'], [797, 1153, 820, 1190, 'c'], [797, 1191, 820, 1227, 'f'], [821, 1116, 842, 1155, 'd'], [821, 1156, 842, 1227, 'c'],
  [323, 783, 450, 970, 'f', 'CHINA LIFE', '+0.58%', 13], [451, 783, 562, 970, 'f', 'PRU', '+1.89%', 13], [323, 971, 440, 1117, 'e', 'MANULIFE-S', '+0.07%', 12], [441, 971, 512, 1108, 'd', 'PICC P&C', '-0.36%', 10.5], [513, 971, 562, 1108, 'c'], [323, 1119, 440, 1227, 'c', 'CPIC', '-0.69%', 11.5], [441, 1110, 502, 1174, 'c', 'NCI', '-0.74%', 10], [503, 1110, 533, 1180, 'c'], [534, 1110, 562, 1180, 'b'], [441, 1175, 502, 1227, 'b'], [503, 1181, 533, 1227, 'f'],
  [893, 164, 983, 383, 'f', 'SHK PPT', '+1.01%', 12.5], [893, 384, 983, 566, 'f', 'CHINA RES LAND', '+0.55%', 11.5], [984, 164, 1073, 315, 'f', 'CHINA OVERSEAS', '+1.25%', 11], [984, 316, 1073, 444, 'f', 'CK ASSET', '+1.59%', 11], [984, 445, 1073, 566, 'n', 'CHINA VANKE', '0.00%', 11], [1074, 164, 1164, 275, 'f', 'LONGFOR GROUP', '+1.18%', 11], [1165, 164, 1240, 275, 'f'], [1074, 277, 1138, 357, 'c', 'SINO LAND', '-0.77%', 10], [1139, 277, 1194, 357, 'f'], [1195, 277, 1240, 357, 'e'], [1074, 358, 1118, 436, 'f'], [1074, 437, 1118, 501, 'g'], [1074, 502, 1118, 566, 'n'], [1119, 358, 1158, 418, 'e'], [1159, 358, 1188, 418, 'n'], [1189, 358, 1216, 418, 'c'], [1217, 358, 1240, 418, 'f'],
  [1244, 164, 1363, 408, 'd', 'NONGFU SPRING', '-0.46%', 14], [1244, 409, 1363, 566, 'c', 'BUD APAC', '-1.06%', 12.5], [1364, 164, 1457, 286, 'c', 'CHINA RES BEER', '-1.23%', 11], [1458, 164, 1531, 286, 'c', 'MENGNIU DAIRY', '-1.86%', 9], [1364, 287, 1421, 392, 'c'], [1422, 287, 1480, 361, 'n', 'TINGYI', '0.00%', 9], [1481, 287, 1531, 361, 'c'], [1422, 362, 1479, 426, 'f', 'WH GROUP', '+0.85%', 9.5], [1480, 362, 1531, 426, 'c'], [1364, 393, 1421, 490, 'e'], [1364, 491, 1421, 566, 'f'], [1422, 427, 1457, 509, 'n'], [1422, 510, 1457, 566, 'g'], [1458, 427, 1496, 468, 'c'], [1497, 427, 1531, 468, 'c'],
  [1139, 619, 1246, 805, 'n', 'CHINA TELECOM', '0.00%', 12.5], [1139, 806, 1238, 905, 'f', 'CHINA UNICOM', '+1.43%', 11], [1239, 806, 1246, 856, 'c'], [1239, 857, 1246, 905, 'e'],
  [1250, 619, 1321, 745, 'e', 'CLP HOLDINGS', '+0.17%', 10], [1322, 619, 1391, 745, 'e', 'HK & CHINA GAS', '+0.39%', 9], [1250, 746, 1327, 852, 'n', 'ENN ENERGY', '0.00%', 10], [1328, 746, 1391, 852, 'e', 'CKI HOLDINGS', '+0.46%', 9.5], [1250, 853, 1321, 934, 'g'], [1322, 853, 1391, 934, 'f', 'POWER ASSETS', '+0.69%', 9.2], [1250, 935, 1323, 1014, 'f', 'CGN POWER', '+0.55%', 10], [1324, 935, 1391, 1014, 'g'], [1250, 1016, 1313, 1092, 'c'], [1314, 1016, 1356, 1077, 'f'], [1357, 1016, 1391, 1077, 'g'], [1250, 1093, 1313, 1159, 'g'], [1314, 1078, 1343, 1131, 'g'], [1344, 1078, 1367, 1131, 'g'], [1368, 1078, 1391, 1131, 'g'], [1250, 1160, 1313, 1227, 'd'], [1314, 1132, 1333, 1180, 'g'], [1314, 1181, 1333, 1227, 'g'], [1334, 1132, 1360, 1165, 'e'], [1334, 1166, 1360, 1195, 'f'],
  [1395, 962, 1531, 1187, 'd', 'SINOPEC CORP', '-0.48%', 13.5], [1395, 1188, 1490, 1227, 'g', 'KUNLUN ENERGY', '+6.62%', 9], [1491, 1188, 1515, 1227, 'n'],
  [1040, 959, 1110, 1117, 'f', 'LI AUTO-W', '+1.20%', 10.5], [1040, 1118, 1110, 1227, 'c', 'NIO-SW', '-1.66%', 10.5], [1111, 959, 1184, 1047, 'c', 'GEELY AUTO', '-0.51%', 10.5], [1185, 959, 1246, 1047, 'c', 'FUYAO GLASS', '-1.45%', 9], [1111, 1048, 1162, 1156, 'g'], [1111, 1157, 1162, 1227, 'b', 'XPENG-W', '-2.63%', 10], [1163, 1048, 1204, 1126, 'd'], [1205, 1048, 1246, 1126, 'c', 'YADEA', '-1.28%', 9], [1163, 1127, 1191, 1178, 'c'], [1192, 1127, 1219, 1163, 'n'], [1220, 1127, 1246, 1163, 'c'], [1163, 1179, 1191, 1227, 'c'], [1192, 1164, 1218, 1194, 'c', 'ZMJ', '', 9.5], [1219, 1164, 1237, 1194, 'b'], [1238, 1164, 1246, 1194, 'c'], [1192, 1195, 1218, 1227, 'e']];
function split(x1, y1, x2, y2, r, pal, out) {
  const w = x2 - x1, h = (y2 - y1) * K; const far = Math.min(1, (x1 - pal.x) / pal.w * 0.5 + (y1 - pal.y) / pal.h * 0.5);
  const lim = 26 - far * 17;
  if (w <= lim && h <= lim) { out.push([x1, y1, x2, y2, pal.c[Math.floor(r() * pal.c.length)]]); return; }
  const k = 0.44 + r() * 0.2;
  if (w > h) { split(x1, y1, x1 + w * k, y2, r, pal, out); split(x1 + w * k, y1, x2, y2, r, pal, out); } else { const m = y1 + (y2 - y1) * k; split(x1, y1, x2, m, r, pal, out); split(x1, m, x2, y2, r, pal, out); }
}
const small = [];
[[493, 629, 562, 729, 'nbcncfgdc', 5], [853, 646, 889, 687, 'ncfnd', 9], [843, 1116, 889, 1227, 'ccdnfgcn', 3], [534, 1181, 562, 1227, 'nfec', 8], [1119, 419, 1240, 566, 'cfffngfcdfn', 21], [1458, 469, 1531, 566, 'fcnfgdfc', 13], [1361, 1132, 1391, 1195, 'nfngf', 4], [1334, 1196, 1391, 1227, 'gfncf', 6], [1516, 1188, 1531, 1227, 'nfcg', 2], [1219, 1195, 1246, 1227, 'ncfnd', 12]]
  .forEach(([a, b, c, d, p, s]) => split(a, b, c, d, rng(s * 7919), { c: p, x: a, y: b, w: c - a, h: d - b }, small));
const HeatRoot = styled.div`width: 1520px; height: 861px; background: #fff; border: 2px solid #bcd4ee; display: flex; flex-direction: column;`;
function HeatMap() {
  const y = v => (v - 117) * K, x = v => v - 26;
  const rect = (t, i) => <rect key={i} x={x(t[0])} y={y(t[1])} width={t[2] - t[0]} height={(t[3] - t[1]) * K} fill={HC[t[4]]} stroke="#fff" strokeOpacity=".6" strokeWidth="1.300" />;
  return (
    <Stage>
      <HeatRoot>
        <Row $h={60} $p="0 12px 15px 11px"><T $w={500} $s={13.5}>HK Heat Map</T><Grow /><Tools /></Row>
        <svg width="1516" height="795" fontFamily="Roboto" fill="#fff">
          {sectors.map(rect)}{big.map(rect)}{tiles.map(rect)}{small.map(rect)}
          {sectors.map(s => <text key={s[5]} x={x(s[0] + 12)} y={y((s[1] + s[3]) / 2) + 6.5} fontSize={s[6]} fontWeight="500" textLength={headLen[s[5]]} lengthAdjust="spacingAndGlyphs">{s[5]}</text>)}
          {big.map(b => <g key={b[5]}><text x={x(b[0] + 12)} y={y(b[9])} fontSize={b[7]} fontWeight="400" textLength={b[11]} lengthAdjust="spacingAndGlyphs">{b[5]}</text><text x={x(b[0] + 12)} y={y(b[10])} fontSize={b[8]} fontWeight="700" textLength={b[12]} lengthAdjust="spacingAndGlyphs">{b[6]}</text></g>)}
          {tiles.filter(t => t[5]).map(t => { const cx = x((t[0] + t[2]) / 2), cy = y((t[1] + t[3]) / 2); const wmax = t[2] - t[0] - 4; const est = t[5].length * t[7] * 0.62; return (
            <g key={t[5]} textAnchor="middle"><text x={cx} y={t[6] ? cy - t[7] * 0.35 : cy + 4} fontSize={t[7] * 1.15} fontWeight="400" textLength={est * 1.15 > wmax ? wmax : undefined} lengthAdjust="spacingAndGlyphs">{t[5]}</text><text x={cx} y={cy + t[7] * 0.95 + 2} fontSize={t[7]} fontWeight="600">{t[6]}</text></g>); })}
          {'abcdnefgh'.split('').map((c, i) => <rect key={c} x={11 + i * 166.1} y={y(1248)} width="166.100" height="9.500" fill={HC[c]} />)}
          {['< -5.0%', '-5.0%', '-2.0%', '-0.5%', '0.0%', '+0.5%', '+2.0%', '+5.0%', '> +5.0%'].map((t, i) => <text key={t} x={94 + i * 166} y={y(1287)} textAnchor="middle" fontSize="13" fill={GRAY}>{t}</text>)}
        </svg>
      </HeatRoot>
    </Stage>
  );
}

/* ---------- preview: side by side ---------- */
function LineCard({ d, area, tall }) {
  const off = tall ? 636 : 0; const y = v => (v - 140 - off) * K; const xl = tall ? 1183 : 527, vy = tall ? 1218 : 562, by = tall ? 1307 : 651, w = d.w || 420;
  const id = 'lc' + d.c; const r = rng(parseInt(d.c, 10) * 977 + 5);
  return (
    <Panel $area={area}>
      <QuoteHead n={d.n} c={d.c + '.HK'} p={d.p} color={d.col} /><IntervalTabs h={26} />
      <svg width={w} height={tall ? 356 : 344} fontSize="12.500" fontFamily="Roboto" style={{ marginTop: 9 }}>
        <Fill id={id} />
        {[172, 257, 341, 425, tall ? 528 : 508, tall ? 564 : 545, tall ? 604 : 583].map(v => <path key={v} d={`M0 ${y(v + off)}H${w}`} stroke={LINE} strokeWidth="1.600" />)}
        <path d={`M240 ${y(172 + off)}V${y(xl - 18)}M240 ${y(vy + 20)}V${y(by)}`} stroke={LINE} strokeWidth="1.600" />
        <path d={line(d.pts, y) + `V${y(xl - 20)}H0Z`} fill={`url(#${id})`} /><path d={line(d.pts, y)} fill="none" stroke="#2c8cf0" strokeWidth="1.800" /><path d={line(d.av, y)} fill="none" stroke="#e8964f" strokeWidth="1.700" />
        <path d={`M0 ${y(d.bl)}H${w}`} stroke="#2c8cf0" strokeWidth="1.800" strokeDasharray="2 2" />{d.gl && <path d={`M0 ${y(d.gl)}H${w}`} stroke="#999" strokeWidth="1.300" strokeDasharray="2 2" />}
        <text x="0" y={y(157 + off)} fill="#f39a50">Avg. Cost: {d.a}</text>
        {d.l.map(t => <text key={t[0]} x="0" y={y(t[1]) + 4} fill={t[2] || '#3fc9a4'}>{t[0]}</text>)}
        <text x="0" y={y(xl) + 4} fill="#a5a3ad">09:30</text><text x="222" y={y(xl) + 4} textAnchor="middle" fill="#a5a3ad">12:00/13:00</text>
        <text x="0" y={y(vy) + 4} fill="#777">VOL</text><text x="37" y={y(vy) + 4} fill="#777">{d.v}</text><text x="0" y={y(vy + 32) + 4} fill="#a5a3ad">{d.m}</text>
        {Array.from({ length: 26 }, (_, i) => { const h = r() > 0.75 ? 6 + r() * 10 : 1 + r() * 3; return <rect key={i} x={1 + i * 3.4} y={y(by) - h} width="1.800" height={h} fill={[GREEN, RED, '#777'][Math.floor(r() * 3)]} />; })}
        {d.sp.map((s, i) => <rect key={i} x={s[0]} y={y(s[1])} width="2" height={y(by) - y(s[1])} fill={s[2]} />)}
      </svg>
    </Panel>
  );
}
const NameCell = styled.div`width: 57px; overflow: hidden; line-height: 19.500px; b { font-weight: 500; display: block; }`;
const stock = [
  { n: 'CKH HOLDINGS', c: '00001', p: '49.250 (+0.51%)', a: '49.36', v: '0', m: '324.50 K', bl: 325, gl: 482, l: [['49.45', 185], ['49.22', 333], ['49.00', 485, '#a5a3ad']], sp: [[26, 580, '#888'], [28, 595, '#888'], [1, 632, GREEN], [42, 636, RED]],
    pts: [[0, 325], [2, 232], [4, 263], [14, 263], [15, 202], [17, 232], [20, 232], [21, 202], [23, 232], [25, 232], [28, 202], [35, 202], [37, 232], [39, 232], [42, 325], [45, 325], [47, 356], [57, 356], [61, 263], [71, 263], [75, 295], [79, 295], [81, 325], [89, 325]], av: [[0, 307], [12, 297], [20, 282], [27, 236], [40, 236], [50, 247], [62, 252], [75, 256], [89, 256]] },
  { n: 'CLP HOLDINGS', c: '00002', p: '57.400 (+0.17%)', a: '57.56', v: '3.50 K', m: '42.00 K', bl: 412, gl: 482, l: [['57.70', 185], ['57.50', 335], ['57.30', 487, '#a5a3ad']], sp: [[0, 590, GREEN], [32, 612, RED], [76, 618, GREEN], [88, 583, RED]],
    pts: [[0, 308], [3, 270], [7, 270], [9, 308], [12, 308], [15, 202], [18, 202], [20, 270], [24, 202], [28, 202], [30, 270], [32, 270], [34, 345], [37, 377], [40, 308], [42, 377], [45, 308], [55, 308], [57, 377], [65, 377], [67, 343], [74, 343], [77, 270], [80, 308], [83, 270], [86, 412], [88, 412]], av: [[0, 265], [25, 268], [32, 261], [40, 267], [65, 270], [70, 278], [83, 282], [89, 300]] },
  { n: 'HK & CHINA GAS', c: '00003', p: '7.700 (+0.26%)', a: '7.70', v: '12.00 K', m: '131.00 K', bl: 343, gl: 436, w: 428, l: [['7.73', 185], ['7.70', 335], ['7.67', 487, RED]], sp: [[0, 583, RED], [28, 590, RED], [50, 598, GREEN], [56, 585, GREEN], [18, 622, GREEN]],
    pts: [[0, 482], [3, 482], [5, 388], [8, 388], [9, 482], [13, 482], [16, 295], [19, 388], [21, 436], [24, 343], [27, 295], [28, 388], [30, 343], [33, 388], [36, 436], [48, 436], [50, 388], [54, 388], [56, 340], [58, 202], [62, 202], [65, 295], [67, 250], [70, 250], [73, 295], [76, 295], [79, 250], [81, 295], [86, 295], [89, 343]], av: [[0, 220], [4, 290], [10, 320], [20, 340], [32, 350], [50, 352], [53, 367], [65, 360], [78, 354], [89, 352]] },
  { n: 'WHARF HOLDINGS', c: '00004', p: '18.940 (0.00%)', col: '#222', a: '19.02', v: '0', m: '38.00 K', bl: 1136, l: [['19.08', 821], ['19.01', 981], ['18.94', 1142, '#a5a3ad']], sp: [[17, 1237, RED], [7, 1284, GREEN], [86, 1254, RED], [72, 1286, RED]],
    pts: [[0, 964], [4, 964], [7, 838], [10, 838], [13, 964], [17, 922], [21, 964], [36, 964], [37, 838], [41, 838], [43, 964], [62, 964], [64, 922], [71, 922], [74, 964], [86, 964], [87, 1136]], av: [[0, 922], [3, 940], [20, 962], [35, 960], [38, 945], [45, 955], [70, 958], [76, 948], [84, 948], [89, 966]] },
  { n: 'HSBC HOLDINGS', c: '00005', p: '57.850 (+0.17%)', a: '58.04', v: '400', m: '1.00 M', bl: 1070, l: [['58.20', 823], ['57.97', 981], ['57.70', 1142, '#a5a3ad']], sp: [[0, 1237, GREEN], [1, 1250, GREEN], [16, 1280, GREEN], [31, 1284, RED]],
    pts: [[0, 940], [2, 885], [3, 970], [5, 970], [7, 905], [9, 970], [12, 970], [15, 842], [18, 890], [19, 937], [22, 907], [24, 940], [27, 940], [30, 970], [50, 970], [52, 1003], [56, 1003], [59, 908], [62, 970], [69, 970], [74, 1003], [76, 1070], [79, 1003], [84, 1003], [87, 1070]], av: [[0, 885], [10, 892], [22, 895], [30, 905], [40, 915], [55, 922], [62, 927], [70, 928], [78, 940], [90, 944]] },
  { n: 'POWER ASSETS', c: '00006', p: '43.700 (+0.69%)', a: '43.67', v: '0', m: '20.10 K', bl: 913, gl: 1136, w: 428, l: [['43.80', 823], ['43.60', 981], ['43.40', 1142, '#a5a3ad']], sp: [[0, 1240, GREEN], [5, 1250, GREEN], [53, 1265, GREEN], [65, 1280, GREEN]],
    pts: [[0, 880], [1, 842], [3, 984], [6, 913], [10, 913], [13, 878], [18, 878], [20, 913], [33, 913], [35, 988], [41, 988], [44, 1060], [48, 1060], [49, 1023], [53, 1023], [56, 913], [57, 878], [61, 913], [64, 878], [82, 878], [85, 913], [89, 913]], av: [[0, 880], [5, 903], [25, 903], [35, 912], [45, 918], [50, 937], [60, 935], [89, 935]] }];
function MultiStock() {
  const wl = [['ZIJING INT', '08340', '0.370', '0.00%'], ['TENCENT', '00700', '382.200', '-1.14%'], ['TCL ELEC', '01070', '3.530', '-0.84%'], ['MB-WXAT', '21768', '0.077', '-9.41%'], ['TestForIPO', '99911', '--', 'To be listed'], ['HKGB IBO', '04246', '97.150', '-0.21%'], ['ZHIHU-W', '02390', '28.000', '+1.63%'], ['WUXI APP', '02359', '93.050', '-1.85%'], ['HKEX', '00388', '333.400', '-0.48%'], ['ORIENTAL', '00430', '0.390', '0.00%'], ['Asymchem', '06821', '114.000', '-1.13%'], ['CLOUD M', '09899', '88.000', '-2.87%'], ['XD INC', '02400', '27.850', '-0.18%', RED]];
  return (
    <Stage $cols="240px 420px 420px 428px" $rows="421px 436px" $gap="4px">
      <Panel $area="1 / 1 / 3 / 2">
        <Row $h={46}><T $w={500}>Watchlist</T><Grow /><Tools /></Row>
        <Cols $h={33} $c="36px 32px 31px 51px 54px auto"><T $c={BLUE}>ALL</T><T $c={GRAY}>HK</T><T $c={GRAY}>US</T><T $c={GRAY} $s={12.5}>自马股</T><T $c={GRAY} $s={12.5}>自选股</T><Down /></Cols>
        <Cols $h={41} $bg="#ebebef" $c="57px 68px 89px"><T $c={GRAY} $s={13}>Name/Co</T><T $c={GRAY} $a="right" $s={13}><S>Price</S></T><T $c={GRAY} $a="right" $s={13}><S>%Change</S></T></Cols>
        {wl.map((s, i) => (
          <Cols key={i} $h={56} $bg={i % 2 ? '#fff' : '#f2f2f3'} $c="57px 73px 80px">
            <NameCell><b>{s[0]}</b><T $c={PINK}>HK&nbsp;</T><T $c={GRAY}>{s[1]}</T></NameCell><T $a="right" $w={500}>{s[2]}</T>
            <T $a="right" $w={500} $c={s[4] || (s[3][0] === '-' ? GREEN : s[3][0] === '+' ? RED : '#222')}>{s[3]}</T>
          </Cols>))}
      </Panel>
      {stock.map((d, i) => <LineCard key={d.c} d={d} tall={i > 2} area={`${i > 2 ? 2 : 1} / ${2 + i % 3}`} />)}
    </Stage>
  );
}

/* ---------- preview: options ---------- */
const Menu = styled(Field)`width: auto; padding: 0 10px; color: #5d5b66; gap: 17px; font-size: 13px; border-width: 1.600px;`;
const IconBtn = styled(Menu)`width: 30px; padding: 0; justify-content: center; svg { color: #222; }`;
const Strike = styled.div`flex: none; height: ${p => p.$h}px; display: grid; grid-template-columns: 42px 90px 110px 77px 66px 89px 121px 111px; background: ${p => p.$bg || 'transparent'}; color: ${p => p.$c || '#111'}; align-items: center;`;
const SC = styled.div`height: 100%; display: flex; align-items: center; gap: 8px; padding: 0 10px; overflow: hidden; justify-content: ${p => ({ l: 'flex-start', c: 'center', r: 'flex-end' }[p.$a || 'c'])}; background: ${p => p.$bg || 'transparent'}; color: ${p => p.$c || 'inherit'}; border-right: 1.2px solid ${LINE}; small { font-size: 11.500px; color: #b5b3bc; }`;
const SplitHead = styled.div`display: grid; grid-template-columns: 319px 66px 321px; height: 32px; flex: none; font-weight: 500;`;
const SplitCell = styled.div`display: flex; align-items: center; padding: 0 20px 0 13px; background: ${p => p.$bg || '#fff'}; color: ${p => p.$c}; justify-content: ${p => p.$j}; font-size: 13.300px;`;
const Band = styled.div`height: 33px; flex: none; background: #ffc0a2; color: ${RED}; display: flex; align-items: center; justify-content: center; font-weight: 500; font-size: 13.5px; padding-right: 10px;`;
function Candles() {
  const y = v => (v - 545) * K, X = v => v - 734; const r = rng(4242);
  const tr = [[746, 680], [770, 690], [785, 690], [805, 710], [825, 670], [848, 640], [862, 680], [880, 735], [905, 740], [920, 690], [940, 680], [965, 665], [985, 610], [1000, 655], [1025, 680], [1050, 695], [1070, 690], [1080, 630], [1105, 590], [1125, 620], [1150, 590]];
  const at = x => { for (let i = 1; i < tr.length; i++) if (x <= tr[i][0]) { const a = tr[i - 1], b = tr[i]; return a[1] + (b[1] - a[1]) * (x - a[0]) / (b[0] - a[0]); } return 590; };
  const n = Array.from({ length: 51 }, (_, i) => 747 + i * 8.06);
  const ma = k => n.filter((_, i) => i % 2 === 0).map(x => [X(x), (at(Math.max(746, x - k)) + at(Math.max(746, x - k * 2)) + at(x) + at(Math.max(746, x - k * 1.5)) + at(Math.max(746, x - k / 2))) / 5 + 2]);
  return (
    <svg width="547" height="232" fontSize="13" fontFamily="Roboto, Noto Sans CJK TC">
      {[572, 638, 684, 730, 800].map(v => <path key={v} d={`M0 ${y(v)}H485`} stroke={LINE} strokeWidth="1.300" />)}
      {[178, 320, 457].map(x => <path key={x} d={`M${x} ${y(560)}V${y(870)}`} stroke="#dcdbe2" strokeWidth="1.500" />)}
      <path d={`M8 ${y(580)}H486`} stroke={PURPLE} strokeWidth="1.500" strokeDasharray="2 3" />
      <path d={`M0 ${y(764)}H547M0 ${y(866)}H547`} stroke="#dcdbe2" strokeWidth="1.500" />
      {n.map((x, i) => { const c = at(x) + (r() - 0.5) * 10, h = 2 + r() * 8, wk = h + r() * 7, col = r() > 0.45 ? RED : GREEN; const vh = i === 13 ? 95 : i === 41 ? 74 : i === 50 ? 53 : 18 + r() * 18 + (i < 14 ? 5 : 0);
        return <g key={i} fill={i === 13 ? GREEN : col}><rect x={X(x) - 0.7} y={y(c - wk)} width="1.400" height={wk * 2 * K} /><rect x={X(x) - 2.4} y={y(c - h)} width="4.800" height={h * 2 * K} /><rect x={X(x) - 3.2} y={y(863) - vh * K} width="6.400" height={vh * K} /></g>; })}
      <rect x={X(845)} y={y(630)} width="7" height="34" fill="#5fd0b6" /><rect x={X(1148)} y={y(570)} width="5.500" height="34" fill={RED} />
      <path d={line(ma(14), y)} fill="none" stroke="#3f9e4d" strokeWidth="1.600" /><path d={line(ma(22), y)} fill="none" stroke="#f08a45" strokeWidth="1.600" />
      {[[768, 674], [862, 673], [918, 710], [1000, 657], [1067, 685], [1130, 622]].map(p => <path key={p[0]} d={`M${X(p[0]) - 7} ${y(p[1])}h14M${X(p[0])} ${y(p[1]) - 7}v14`} stroke="#3aa0ff" strokeWidth="4.500" />)}
      <circle cx="36" cy={y(583)} r="8" fill="#c9c7cf" /><path d={`M31 ${y(583)}h10`} stroke="#555" strokeWidth="2.500" />
      <text x="19" y={y(623)} fill={RED} fontSize="14.500">+4.180 (+4.54%)</text><text x="19" y={y(663)} fill="#777" fontSize="14">MA/EAM交叉</text><text x="19" y={y(799)} fill="#777" fontSize="14.500">成交量</text>
      <circle cx="41" cy={y(709)} r="18" fill="#f2f2f4" stroke="#dddce2" /><text x="41" y={y(717)} fontWeight="900" fontSize="17" textAnchor="middle">TV</text>
      <rect x="107" y={y(724)} width="18" height="20" fill="#fff" stroke={BLUE} strokeWidth="2.500" /><text x="116" y={y(746)} fill={BLUE} textAnchor="middle">財</text>
      {[['96.350', 581, '#7343ef'], ['93.408', 608, '#e8741e'], ['92.544', 633, '#35a83f'], ['91.861', 658, '#2790ee']].map(t => <g key={t[0]}><rect x="488" y={y(t[1]) - 8.5} width="53" height="17" fill={t[2]} /><text x="514" y={y(t[1]) + 4.5} textAnchor="middle" fill="#fff">{t[0]}</text></g>)}
      <text x="494" y={y(691)} fill="#777">85.000</text><text x="494" y={y(736)} fill="#777">80.000</text><text x="496" y={y(804)} fill="#777">40M</text>
      <rect x="488" y={y(799)} width="59" height="16" fill={RED} /><text x="492" y={y(816)} fill="#fff" letterSpacing="-.3">33.370M</text>
      <rect x="0" y={y(767)} width="9" height="31" rx="4" fill={PURPLE} /><path d={`M3 ${y(783)}l3 5l-3 5`} stroke="#fff" fill="none" strokeWidth="1.500" />
      {[['五月', 26], ['六月', 177], ['七月', 319], ['八月', 457]].map(t => <text key={t[0]} x={t[1]} y={y(892)} textAnchor="middle" fill="#666">{t[0]}</text>)}
      <circle cx="521" cy={y(888)} r="8" fill="none" stroke="#222" strokeWidth="2" />
    </svg>
  );
}
function Options() {
  const row = (pct, a, ax, b, bx, k, l, c, cx, d, dx) => ({ pct, a, ax, b, bx, k, l, c, cx, d, dx });
  const strike = (r, lead, itm, bg) => (
    <Strike $h={33} key={r.k}>
      <SC $a="l" $c={RED} $bg={bg ? '#fde9e1' : '#fff'} style={{ paddingLeft: 0 }}>{lead}</SC><SC $c={RED} $bg={bg ? '#fde0d3' : '#fff'} style={{ padding: 0 }}>{r.pct}</SC>
      <SC $a="l" $bg={bg ? '#fde9e1' : '#fff'}>{r.a}<small>x &nbsp;{r.ax}</small></SC><SC $a="l" $bg={bg ? '#fde9e1' : '#fff'}>{r.b}<small>x&nbsp;{r.bx}</small></SC>
      <SC $bg="#fff">{r.k}</SC><SC $a="r" $c={GREEN} $bg={itm}>{r.l}</SC><SC $a="r" $bg={itm} style={{ paddingRight: 18 }}>{r.c}<small>x &nbsp;{r.cx}</small></SC><SC $a="r" $bg={itm} style={{ paddingRight: 18 }}>{r.d}<small>x {r.dx}</small></SC>
    </Strike>
  );
  const acc = ['總資產:', '現金總額:', '持倉市值:', '持倉盈虧:', '融資總利息:', '最大購買力:'];
  const o = (ac, k, st, sy, sn, q) => [<Check key="c" $c="#c2d2d0" />, { t: actions('#8a5cff') }, ac, 'LIDABAI LI LIDABAI L', { t: <Status3 k={k} t={st} /> }, { t: 'US', c: '#4a7dff' }, sy, sn, { t: '賣', c: GREEN, w: 600 }, '--', '限價單', q, ''];
  return (
    <Stage $bg="#eae8f4" $cols="706px 547px 255px" $rows="229px 346px 276px" $gap="5px 6px">
      <Panel $area="1 / 1">
        <Row $h={47}><Field $w={179} style={{ fontSize: 13.3 }}>請選擇客戶 <Mag /></Field><T $c={GRAY} $ml={26}>--</T><Grow /><Tools refresh /></Row>
        <Tabs $h={41} $g={22.3} style={{ fontSize: 13.2 }}><OnTab $c={PURPLE}>資產總覽</OnTab>{['客戶持倉', '當日訂單', '歷史訂單', '今日成交', '客戶資料', '銀行卡', '代理人信息', '聯名戶信息'].map(t => <T key={t}>{t}</T>)}</Tabs>
        <Row $h={44} $g={22} style={{ fontSize: 13 }}><T $c={GRAY}>HKD <Down s={9} /></T>{acc.map(a => <T key={a} $c={GRAY}>{a} <T $c="#222">&nbsp;--</T></T>)}</Row>
        <Table cols={[96, 82, 83, 82, 74, 83, 82, 82, 60]} align={['l', 'r', 'r', 'r', 'r', 'r', 'r', 'r', 'l']} hh={37} rh={39} headC="#222" headW={500}
          head={['現金幣種', '總額', '可用金額', '可提金額', '凍結金額', '融資利息', '待結算金', 'T0 待交收', "T+1"].map((t, i) => <Pad key={t} $x={i ? 0 : 8}><T $s={13} $w={500}>{t}</T></Pad>)}
          rows={['HKD', 'USD'].map(c => [<Pad key="c" $x={8}>{c}</Pad>, '0.00', '0.00', '0.00', '0.00', '0.00', '0.00', '0.00', ''])} />
      </Panel>
      <Panel $area="1 / 2 / 2 / 4">
        <Row $h={47}><T $w={700} $s={13}>持倉</T><Grow /><Tools /></Row>
        <Row $h={45} $g={9} $p="0 13px 11px 13px"><Field $w={179} $c="#111">全部 <Down /></Field><Field $w={179}>搜索賬戶 <Mag /></Field><Field $w={179}>股票代碼 <Mag /></Field><Grow /><IconBtn><OutBox s={15} /></IconBtn><IconBtn><Filter size={15} /></IconBtn></Row>
        <Table cols={[107, 107, 106, 62, 107, 133, 177, 11]} align={['l', 'c', 'c', 'c', 'c', 'c', 'c', 'c']} hh={43} rh={33.500}
          head={['操作', '證券賬戶', '客戶姓名', '市場', '股票代碼', '股票名稱', '持倉市值', ''].map((t, i) => <Pad key={t} $x={i ? 0 : 4}><T $s={13.300}>{t}</T></Pad>)} bg={j => ['#f6f6f8', '#fff'][j]}
          rows={[[{ t: <Pad $x={9} $g={19}><T $s={13}>買入</T><T $s={13}>賣出</T></Pad>, c: '#8a5cff' }, 'LPT670429', '劉 CHUANYUAN C', { t: 'HK', c: PINK }, '00424', <T key="n" $s={13.300}>澳能建設二四零五</T>, '104,535,728.67', ''],
            [{ t: <Pad $x={9} $g={19}><T $s={13}>買入</T><T $s={13}>賣出</T></Pad>, c: '#8a5cff' }, 'LPT243084', '奔奔 FANG BENBE', { t: 'HK', c: PINK }, '11120', '', '--', '']]} />
        <Pager color="#8a5cff" last="20" />
      </Panel>
      <Panel $area="2 / 1">
        <Row $h={46}><Field $w={267} $c="#111">阿里巴巴 BABA.US <Mag /></Field><Grow /><Tools /></Row>
        <Row $h={50} $p="0 18px 0 17px" $g={10} style={{ fontSize: 13.300 }}><T $c={PURPLE}>阿里巴巴</T><T $c={RED} $s={14} $ml={-5}>96.350&nbsp; +4.180&nbsp; +4.54%</T><T $ml={5} /><Pill $h={27} $px={12} $bg="#fff" $c="#111" $bd="2px solid #85838e">全部類型</Pill><Pill $h={27} $px={13} $bg="#f0f0f3" $c={GRAY} $w={400}>看漲 CALL</Pill><Pill $h={27} $px={13} $bg="#f0f0f3" $c={GRAY} $w={400}>看跌 PUT</Pill><Grow /><ListFilter size={15} color={GRAY} /></Row>
        <Row $h={37} $g={14.800} $p="0 0 2px 13px"><T $c={GRAY}>23/07/21</T><T $w={700}>23/07/28</T>{['23/08/04', '23/08/11', '23/08/18', '23/08/25', '23/09/01', '23/09/15', '23/10/20'].map(t => <T key={t} $c={GRAY}>{t}</T>)}<Down s={13} /></Row>
        <SplitHead><SplitCell $c={RED} $j="flex-start">看漲期權 (CALL)</SplitCell><SplitCell $bg="#ebebef" $c={GRAY} $j="center"><svg width="20" height="14" viewBox="0 0 20 14" fill={GRAY}><path d="M1 2l7 5-7 5ZM19 2l-7 5 7 5ZM9.300 0h1.400v14H9.300Z" /></svg></SplitCell><SplitCell $c={GREEN} $j="flex-end">看跌期權 (PUT)</SplitCell></SplitHead>
        <Strike $h={45} $bg="#ebebef" $c={GRAY} style={{ fontSize: 13.300 }}><SC $a="l" style={{ paddingLeft: 0 }}>|</SC><SC>漲跌幅</SC><SC $a="l">賣盤</SC><SC $a="l">買盤</SC><SC>行權價</SC><SC $a="r">最新價</SC><SC $a="r" style={{ paddingRight: 17 }}>買盤</SC><SC $a="r" style={{ paddingRight: 16 }}>賣盤</SC></Strike>
        <Row $h={11} $bg="#f4f4f6" />
        {strike(row('+158.82%', '2.25', '11', '2.21', '1', '96', '1.85', '1.80', '10', '1.85', '20'), '0', '#fff', true)}
        <Band>股票價格：96.350 &nbsp;+4.180 &nbsp;+4.54%</Band>
        {strike(row('+164.18%', '1.82', '9', '1.78', '', '97', '2.48', '2.37', '9', '2.41', '9'), '0', '#e3f4f1', false)}
        {strike(row('+184.31%', '1.48', '18', '1.47', '', '98', '3.10', '3.00', '31', '3.20', '1028'), '00', '#d9f0ec', false)}
      </Panel>
      <Panel $area="2 / 2">
        <Row $h={43} $p="0 14px 0 12px"><Field $w={377} $c="#111"><span>阿里巴巴 BABA.US</span><T $c={RED} $ml={100}>96.350 (+4.54%)</T><Mag /></Field><Grow /><Tools /></Row>
        <Row $h={26} $g={21} style={{ fontSize: 13.300 }}><T $c={GRAY}>盤中分時<Down s={9} /></T><T $c={GRAY}>5日</T><Pill $bg={PURPLE} $px={10} style={{ margin: '0 -8px' }}>日 K</Pill>{['周 K', '月 K', '年 K', '1 分', '5 分', '15 分', '30 分', '60'].map(t => <T key={t} $c={GRAY}>{t}</T>)}</Row>
        <Row $h={47} $p="14px 2px 0 13px" $g={12}><svg width="15" height="20" viewBox="0 0 15 20" fill="none" stroke="#222" strokeWidth="1.600"><path d="M1 3h4v14h-4M11 3v3M11 14v3" /><rect x="9" y="6" width="4" height="8" /></svg><T $c="#777" $s={18}>|</T><T $s={19} style={{ fontFamily: 'Liberation Serif', fontStyle: 'italic' }}>fx</T><T>技術指標</T><Grow /><T $s={20}>|</T><Settings size={22} strokeWidth={1.6} /></Row>
        <Candles />
      </Panel>
      <Panel $area="2 / 3">
        <Row $h={46} $line><Field $w={174} $c="#111" style={{ fontSize: 13 }}>阿里巴巴 BABA.US <Mag /></Field><Grow /><Tools /></Row>
        <Row $h={48} $p="0 9px 0 9px"><T $c={RED} $w={700} $s={28.500}>96.350</T><T $c={RED} $w={500} $s={12.700} $ml={5}>+4.180 +4.54%</T><Grow /><HeartFill c={GRAY} /></Row>
        <Row $h={28} $p="0 9px"><T $c={GRAY} $s={13}>盤後</T><T $c={RED} $w={500} $s={13} $ml={6}>96.460 +0.1100 +0.11%</T></Row>
        <Row $h={31} $p="0 9px" $jc="space-between"><T $c={GRAY} $s={13}>今開</T><T $c={GREEN}>92.070</T></Row>
        <Row $h={26} $p="0 9px" $jc="space-between"><T $c={GRAY} $s={13}>最高</T><T $c={RED}>97.469</T></Row>
        <Row $h={38} $p="0 9px 10px" $line><T $c={GRAY} $s={13}>更多 ▸</T></Row>
        <Row $h={33} $p="0 13px"><T $c={RED} $w={500} $s={13.500}>買 11.11%</T><T $c={GREEN} $w={500} $s={13.500} $ml={50}>賣 88.89%</T></Row>
        <Bar $v={11.1} $m="0 13px"><i /><i /></Bar>
        <Row $h={38} $p="0 13px" $line $g={6}><Badge $w={28} $bg={RED}>BBO</Badge><T $c={GREEN} $s={15.500}>96.000</T><Grow /><T $s={15.500}>200</T></Row>
        <Row $h={38} $p="0 13px" $g={6}><Badge $w={28} $bg={GREEN}>BBO</Badge><T $c={RED} $s={15.500}>96.480</T><Grow /><T $s={15.500}>1.6K</T></Row>
      </Panel>
      <Panel $area="3 / 1 / 4 / 3">
        <Row $h={39} style={{ fontSize: 13.200 }}><OnTab $c={PURPLE}>當日訂單</OnTab><T $c={GRAY} $ml={22} $w={500}>歷史訂單</T><Grow /><Tools /></Row>
        <Row $h={49} $g={9.500}>{['市場', '訂單狀態', '股票', '客戶', '委託人', '訂單類型', '委託渠道', '賣空類型', '覆盤狀態'].map(t => <Menu key={t}>{t}<Down /></Menu>)}<IconBtn><Trash2 size={13} /></IconBtn><Grow /><IconBtn><RotateCw size={13} /></IconBtn><IconBtn><OutBox /></IconBtn><IconBtn><Filter size={13} /></IconBtn></Row>
        <Table cols={[55, 111, 113, 132, 123, 55, 84, 155, 89, 89, 111, 132, 10]} align={orderAlign} hh={41} rh={33.400} bg={() => '#def0ee'} line="#d3e4e2"
          head={[<Check key="c" />, '操作', <S key="1">證券賬戶</S>, '客戶姓名', <S key="2">訂單狀態</S>, <S key="3">市場</S>, <S key="4">股票代碼</S>, '股票名稱', <S key="5">方向</S>, <S key="6">本方席位號</S>, <S key="7">委託類型</S>, <S key="8">委託數量</S>, ''].map((h, i) => <T key={i} $s={12.800}>{h}</T>)}
          rows={[o('LPT243240', 'ok', '全部成交', 'AAPL230818', 'AAPL 230818 195 Put', '3 張'), o('LPT243240', 'w', '已撤單', 'AAPL230818', 'AAPL 230818 195 Put', '3 張'), o('LPT243240', 'w', '已撤單', 'AAPL230818', 'AAPL 230818 195 Call', '3 張'), o('LPT00243241', 'x', '已拒絕', 'BABA', '阿里巴巴', '4'), o('LPT243240', 'x', '已拒絕', 'BABA', '阿里巴巴', '4')]} />
      </Panel>
      <Ticketing area="3 / 3" name="阿里巴巴" code="BABA.US" l={40} f={161} unit="USD" submit="買入下單" rows={[
        { l: '賬戶', f: ask('請輸入', 1) }, { l: '代碼', f: ask('BABA.US') }, { l: '類型', f: pick('限價單') }, { l: '方向', f: <Side2 a="買入" b="賣出" /> }]} />
    </Stage>
  );
}

/* ---------- header icons ---------- */
const Ico = ({ children, w = 25 }) => <svg width={w} height="25" viewBox="0 0 25 25" fill="none" stroke="currentColor" strokeWidth="1.900" strokeLinejoin="round">{children}</svg>;
const icons = {
  heart: <Ico><path d="M12.500 23 3 13.500C-1.500 8 3 2.200 7.500 2.200c2.500 0 4.300 1.600 5 3 .7-1.400 2.500-3 5-3C22 2.200 26.500 8 22 13.500Z" /></Ico>,
  trend: <Ico><path d="M1 22.500H24M3 15.500 9.500 7l4.500 5.500L23 2" /></Ico>,
  leaf: <Ico><circle cx="12.500" cy="12.500" r="11.200" /><path d="M8 8.500c4.500-.5 9 2 9.500 5.500.3 3-3.500 4.500-6 2.500C9.500 15 8.500 12 8 8.500Z" /></Ico>,
  pie: <Ico><path d="M10.500 2.500A10.500 10.500 0 1 0 22.500 14H10.500ZM15 2V9.500h7.500C22 5.800 19 2.500 15 2Z" /></Ico>,
  target: <Ico><circle cx="12.500" cy="12.500" r="11.500" /><path d="M12.500 1v6M12.500 18v6M1 12.500h6M18 12.500h6" /><circle cx="12.500" cy="12.500" r="1" fill="currentColor" /></Ico>,
  grid: <Ico><path d="M2 2.500h20.500v20.500H2ZM9 2.500v20.500M9 16h13.500" /></Ico>,
};

const cards = [['證券交易', '證券交易看盤', Securities], ['窩輪牛熊交易', '窩輪牛熊交易看盤', Warrants], ['板塊熱力圖', '板塊熱點及個股漲跌情況概覽', HeatMap], ['多股同列', '多股票同時盯盤', MultiStock], ['期權交易', '期權交易看盤', Options, '#8a8890']];

export default function App() {
  return (
    <Page>
      <Global />
      <Header>
        <Nav>
          <Status />
          <NavItem>{icons.heart}自選</NavItem><NavItem>{icons.trend}個股</NavItem><NavItem>{icons.leaf}行情</NavItem><NavItem>{icons.pie}交易</NavItem><NavItem>{icons.target}選股器</NavItem>
          <NavItem>{icons.grid}机构单</NavItem><NavItem>{icons.grid}订单、持仓</NavItem><NavItem>{icons.grid}人手单</NavItem>
          <ActiveNav>{icons.grid}佈局選擇</ActiveNav>
          <Plus><svg width="20" height="20" viewBox="0 0 20 20"><path d="M10 0v20M0 10h20" stroke="currentColor" strokeWidth="2.400" /></svg></Plus>
        </Nav>
        <SearchField>代碼/拼音/名稱<Search size={24} strokeWidth={1.6} /></SearchField>
      </Header>
      <TabBar>
        <PageTab>自定義佈局</PageTab>
        <SpotTab>自適應佈局<TabLine /></SpotTab>
      </TabBar>
      <CardGrid>
        <Spotlight>
          <Card $border={PURPLE}>
            <Preview><svg width="120" height="120" viewBox="0 0 120 120"><path d="M60 0v120M0 60h120" stroke="#c9c8d2" strokeWidth="12" /></svg></Preview>
            <Caption><Title>空佈局</Title><Sub>從空白布局開始自定義添加組件</Sub></Caption>
          </Card>
        </Spotlight>
        {cards.map(([t, s, C, b]) => (
          <Card key={t} $border={b}><Preview><C /></Preview><Caption><Title>{t}</Title><Sub>{s}</Sub></Caption></Card>
        ))}
      </CardGrid>
      <Dim />
      <Callout $x={1454} $y={91} $w={317} $tx={130} $ty={-35}><svg width="40" height="37"><path d="M8 0 34 37H10Z" fill="#fc3f65" /></svg>選中<Quote>“+”</Quote>進入佈局選擇</Callout>
      <Callout $x={547} $y={156} $w={401} $tx={150} $ty={46}><svg width="54" height="34"><path d="M18 0H50L3 32Z" fill="#fc3f65" /></svg>點擊打開新的自適應佈局畫面</Callout>
    </Page>
  );
}
